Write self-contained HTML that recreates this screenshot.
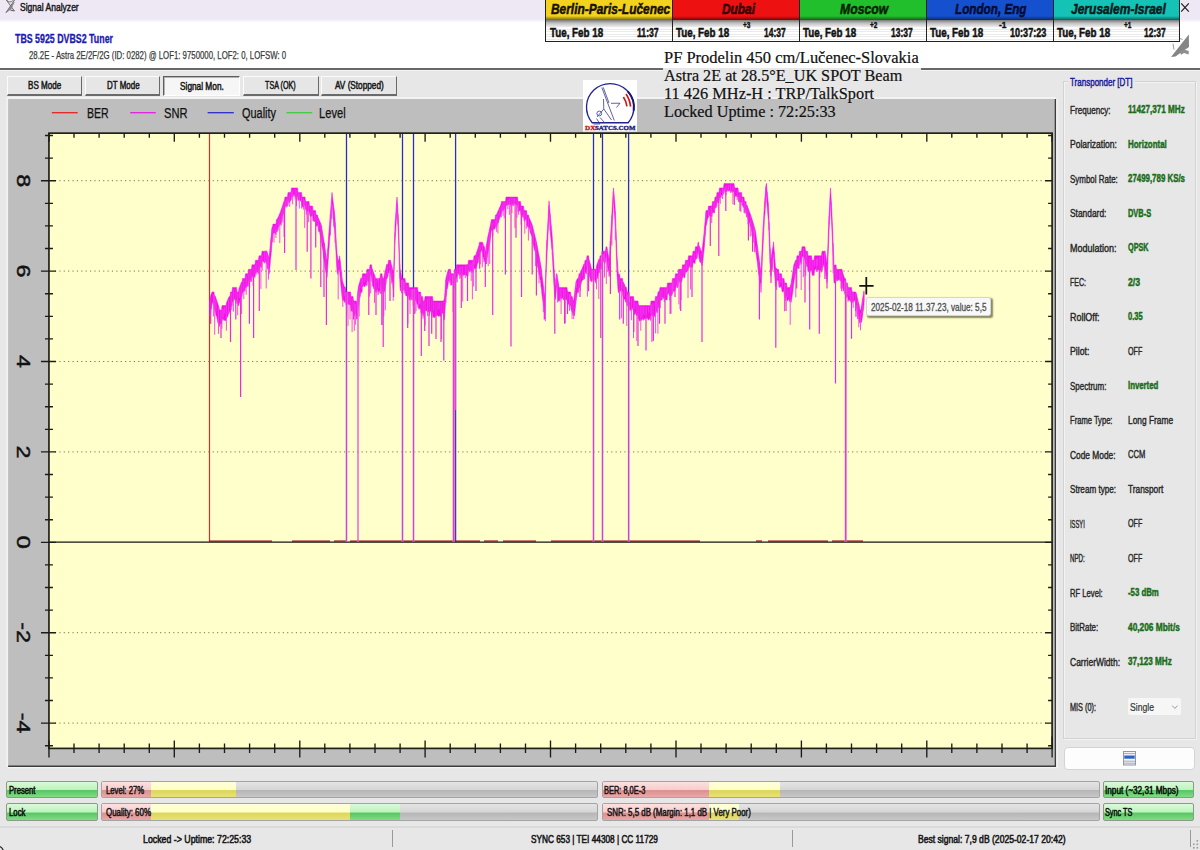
<!DOCTYPE html>
<html><head><meta charset="utf-8"><title>Signal Analyzer</title>
<style>
html,body{margin:0;padding:0;}
body{width:1200px;height:850px;overflow:hidden;background:#f0f0f0;position:relative;font-family:"Liberation Sans",sans-serif;}
.b{position:absolute;box-sizing:border-box;}
.t{position:absolute;white-space:nowrap;transform-origin:0 50%;display:block;}
svg{position:absolute;left:0;top:0;}
</style></head><body>
<div class="b" style="left:0.0px;top:0.0px;width:1200.0px;height:21.5px;background:linear-gradient(#eee8f5 0,#eee8f5 86%,#fbfafd 100%);"></div>
<div class="b" style="left:0.0px;top:21.5px;width:1200.0px;height:46.0px;background:#fff;"></div>
<div class="b" style="left:0.0px;top:69.0px;width:1200.0px;height:781.0px;background:#e7e7e7;"></div>
<div class="b" style="left:0.0px;top:67.9px;width:1200.0px;height:1.7px;background:#686868;"></div>
<div class="b" style="left:0.0px;top:69.6px;width:1200.0px;height:1.4px;background:#f4f4f4;"></div>
<svg width="20" height="20" viewBox="0 0 20 20"><g fill="none" stroke="#6a6a6a" stroke-width="1"><path d="M5.6 -1 L14.3 10.8 M14.6 0 L6 12.6"/><path d="M14.2 2.2 L11 9 L6.2 12.4 Z" fill="#8a8a8a" stroke="#777" stroke-width="0.6"/><path d="M10.5 10.2 L14.5 10.8" stroke-width="1.2"/><path d="M6.5 0 Q10 4 13.5 0" stroke-width="0.9"/></g></svg>
<span class="t" style="left:20.0px;top:0.0px;font:10.5px/15px 'Liberation Sans',sans-serif;color:#181818;transform:scaleX(0.811);-webkit-text-stroke:0.45px #181818;">Signal Analyzer</span>
<span class="t" style="left:14.5px;top:30.8px;font:bold 12px/17px 'Liberation Sans',sans-serif;color:#1a1ab4;transform:scaleX(0.736);-webkit-text-stroke:0.3px #1a1ab4;">TBS 5925 DVBS2 Tuner</span>
<span class="t" style="left:28.7px;top:48.3px;font:10.5px/15px 'Liberation Sans',sans-serif;color:#3c3c3c;transform:scaleX(0.743);-webkit-text-stroke:0.25px #3c3c3c;">28.2E - Astra 2E/2F/2G (ID: 0282) @ LOF1: 9750000, LOF2: 0, LOFSW: 0</span>
<svg width="1200" height="22" viewBox="0 0 1200 22"><path d="M1181.2 3.3 L1188.8 11.6 M1188.8 3.3 L1181.2 11.6" stroke="#1c1c1c" stroke-width="1.15" fill="none"/></svg>
<div class="b" style="left:7.0px;top:75.6px;width:75.0px;height:20.1px;background:#e6e6e6;border-top:1px solid #fbfbfb;border-left:1px solid #fbfbfb;border-right:1.5px solid #6a6a6a;border-bottom:2px solid #6a6a6a;"></div>
<span class="t" style="left:28.0px;top:77.8px;font:10.5px/15px 'Liberation Sans',sans-serif;color:#161616;transform:scaleX(0.769);-webkit-text-stroke:0.5px #161616;">BS Mode</span>
<div class="b" style="left:85.0px;top:75.6px;width:74.5px;height:20.1px;background:#e6e6e6;border-top:1px solid #fbfbfb;border-left:1px solid #fbfbfb;border-right:1.5px solid #6a6a6a;border-bottom:2px solid #6a6a6a;"></div>
<span class="t" style="left:106.7px;top:77.8px;font:10.5px/15px 'Liberation Sans',sans-serif;color:#161616;transform:scaleX(0.758);-webkit-text-stroke:0.5px #161616;">DT Mode</span>
<div class="b" style="left:162.8px;top:75.6px;width:77.7px;height:20.1px;background:#f6f6f6;border:1.5px solid #5e5e5e;border-right:1px solid #fff;border-bottom:1px solid #fff;box-shadow:inset 1px 1px 0 #b4b4b4;"></div>
<span class="t" style="left:180.2px;top:78.8px;font:10.5px/15px 'Liberation Sans',sans-serif;color:#161616;transform:scaleX(0.790);-webkit-text-stroke:0.5px #161616;">Signal Mon.</span>
<div class="b" style="left:242.6px;top:75.6px;width:76.1px;height:20.1px;background:#e6e6e6;border-top:1px solid #fbfbfb;border-left:1px solid #fbfbfb;border-right:1.5px solid #6a6a6a;border-bottom:2px solid #6a6a6a;"></div>
<span class="t" style="left:265.0px;top:77.8px;font:10.5px/15px 'Liberation Sans',sans-serif;color:#161616;transform:scaleX(0.683);-webkit-text-stroke:0.5px #161616;">TSA (OK)</span>
<div class="b" style="left:321.3px;top:75.6px;width:76.2px;height:20.1px;background:#e6e6e6;border-top:1px solid #fbfbfb;border-left:1px solid #fbfbfb;border-right:1.5px solid #6a6a6a;border-bottom:2px solid #6a6a6a;"></div>
<span class="t" style="left:335.3px;top:77.8px;font:10.5px/15px 'Liberation Sans',sans-serif;color:#161616;transform:scaleX(0.782);-webkit-text-stroke:0.5px #161616;">AV (Stopped)</span>
<div class="b" style="left:545.0px;top:0.0px;width:635.4px;height:42.4px;background:#222;"></div>
<div class="b" style="left:546.1px;top:0.0px;width:126.0px;height:20.3px;background:linear-gradient(#f2d21c 0,#f2d21c 80%,rgba(0,0,0,.5) 100%),#f2d21c;"></div>
<div class="b" style="left:546.1px;top:20.3px;width:126.0px;height:21.0px;background:linear-gradient(#787878 0,#bdbdbd 14%,#e6e6e6 30%,#fff 50%),#fff;"><div class="b" style="left:0;top:7px;right:0;bottom:0;background:repeating-linear-gradient(#fff 0,#fff 1.6px,#e6e6e6 1.6px,#e6e6e6 2.6px);opacity:.8"></div></div>
<span class="t" style="left:550.7px;top:-0.6px;font:italic bold 14.5px/20px 'Liberation Sans',sans-serif;color:#161000;transform:scaleX(0.822);-webkit-text-stroke:0.5px #161000;">Berlin-Paris-Lučenec</span>
<span class="t" style="left:549.5px;top:24.2px;font:bold 12.5px/18px 'Liberation Sans',sans-serif;color:#111;transform:scaleX(0.783);-webkit-text-stroke:0.5px #111;">Tue, Feb 18</span>
<span class="t" style="left:636.9px;top:24.2px;font:bold 12.5px/18px 'Liberation Sans',sans-serif;color:#111;transform:scaleX(0.691);-webkit-text-stroke:0.5px #111;">11:37</span>
<div class="b" style="left:672.9px;top:0.0px;width:126.0px;height:20.3px;background:linear-gradient(#ee1111 0,#ee1111 80%,rgba(0,0,0,.5) 100%),#ee1111;"></div>
<div class="b" style="left:672.9px;top:20.3px;width:126.0px;height:21.0px;background:linear-gradient(#787878 0,#bdbdbd 14%,#e6e6e6 30%,#fff 50%),#fff;"><div class="b" style="left:0;top:7px;right:0;bottom:0;background:repeating-linear-gradient(#fff 0,#fff 1.6px,#e6e6e6 1.6px,#e6e6e6 2.6px);opacity:.8"></div></div>
<span class="t" style="left:721.5px;top:-0.6px;font:italic bold 14.5px/20px 'Liberation Sans',sans-serif;color:#300000;transform:scaleX(0.819);-webkit-text-stroke:0.5px #300000;">Dubai</span>
<span class="t" style="left:676.3px;top:24.2px;font:bold 12.5px/18px 'Liberation Sans',sans-serif;color:#111;transform:scaleX(0.783);-webkit-text-stroke:0.5px #111;">Tue, Feb 18</span>
<span class="t" style="left:763.7px;top:24.2px;font:bold 12.5px/18px 'Liberation Sans',sans-serif;color:#111;transform:scaleX(0.676);-webkit-text-stroke:0.5px #111;">14:37</span>
<span class="t" style="left:743.2px;top:19.1px;font:bold 9px/13px 'Liberation Sans',sans-serif;color:#111;transform:scaleX(0.721);-webkit-text-stroke:0.4px #111;">+3</span>
<div class="b" style="left:799.7px;top:0.0px;width:126.0px;height:20.3px;background:linear-gradient(#22bf2c 0,#22bf2c 80%,rgba(0,0,0,.5) 100%),#22bf2c;"></div>
<div class="b" style="left:799.7px;top:20.3px;width:126.0px;height:21.0px;background:linear-gradient(#787878 0,#bdbdbd 14%,#e6e6e6 30%,#fff 50%),#fff;"><div class="b" style="left:0;top:7px;right:0;bottom:0;background:repeating-linear-gradient(#fff 0,#fff 1.6px,#e6e6e6 1.6px,#e6e6e6 2.6px);opacity:.8"></div></div>
<span class="t" style="left:839.8px;top:-0.6px;font:italic bold 14.5px/20px 'Liberation Sans',sans-serif;color:#041e04;transform:scaleX(0.843);-webkit-text-stroke:0.5px #041e04;">Moscow</span>
<span class="t" style="left:803.1px;top:24.2px;font:bold 12.5px/18px 'Liberation Sans',sans-serif;color:#111;transform:scaleX(0.783);-webkit-text-stroke:0.5px #111;">Tue, Feb 18</span>
<span class="t" style="left:890.5px;top:24.2px;font:bold 12.5px/18px 'Liberation Sans',sans-serif;color:#111;transform:scaleX(0.676);-webkit-text-stroke:0.5px #111;">13:37</span>
<span class="t" style="left:870.0px;top:19.1px;font:bold 9px/13px 'Liberation Sans',sans-serif;color:#111;transform:scaleX(0.721);-webkit-text-stroke:0.4px #111;">+2</span>
<div class="b" style="left:926.5px;top:0.0px;width:126.0px;height:20.3px;background:linear-gradient(#1551cf 0,#1551cf 80%,rgba(0,0,0,.5) 100%),#1551cf;"></div>
<div class="b" style="left:926.5px;top:20.3px;width:126.0px;height:21.0px;background:linear-gradient(#787878 0,#bdbdbd 14%,#e6e6e6 30%,#fff 50%),#fff;"><div class="b" style="left:0;top:7px;right:0;bottom:0;background:repeating-linear-gradient(#fff 0,#fff 1.6px,#e6e6e6 1.6px,#e6e6e6 2.6px);opacity:.8"></div></div>
<span class="t" style="left:954.7px;top:-0.6px;font:italic bold 14.5px/20px 'Liberation Sans',sans-serif;color:#040a30;transform:scaleX(0.807);-webkit-text-stroke:0.5px #040a30;">London, Eng</span>
<span class="t" style="left:929.9px;top:24.2px;font:bold 12.5px/18px 'Liberation Sans',sans-serif;color:#111;transform:scaleX(0.783);-webkit-text-stroke:0.5px #111;">Tue, Feb 18</span>
<span class="t" style="left:1009.6px;top:24.2px;font:bold 12.5px/18px 'Liberation Sans',sans-serif;color:#111;transform:scaleX(0.726);-webkit-text-stroke:0.5px #111;">10:37:23</span>
<span class="t" style="left:998.5px;top:19.1px;font:bold 9px/13px 'Liberation Sans',sans-serif;color:#111;transform:scaleX(0.925);-webkit-text-stroke:0.4px #111;">-1</span>
<div class="b" style="left:1053.3px;top:0.0px;width:125.9px;height:20.3px;background:linear-gradient(#14c2b6 0,#14c2b6 80%,rgba(0,0,0,.5) 100%),#14c2b6;"></div>
<div class="b" style="left:1053.3px;top:20.3px;width:125.9px;height:21.0px;background:linear-gradient(#787878 0,#bdbdbd 14%,#e6e6e6 30%,#fff 50%),#fff;"><div class="b" style="left:0;top:7px;right:0;bottom:0;background:repeating-linear-gradient(#fff 0,#fff 1.6px,#e6e6e6 1.6px,#e6e6e6 2.6px);opacity:.8"></div></div>
<span class="t" style="left:1070.8px;top:-0.6px;font:italic bold 14.5px/20px 'Liberation Sans',sans-serif;color:#031a1a;transform:scaleX(0.829);-webkit-text-stroke:0.5px #031a1a;">Jerusalem-Israel</span>
<span class="t" style="left:1056.7px;top:24.2px;font:bold 12.5px/18px 'Liberation Sans',sans-serif;color:#111;transform:scaleX(0.783);-webkit-text-stroke:0.5px #111;">Tue, Feb 18</span>
<span class="t" style="left:1144.0px;top:24.2px;font:bold 12.5px/18px 'Liberation Sans',sans-serif;color:#111;transform:scaleX(0.676);-webkit-text-stroke:0.5px #111;">12:37</span>
<span class="t" style="left:1123.6px;top:19.1px;font:bold 9px/13px 'Liberation Sans',sans-serif;color:#111;transform:scaleX(0.721);-webkit-text-stroke:0.4px #111;">+1</span>
<div class="b" style="left:671.8px;top:0.0px;width:1.3px;height:42.0px;background:#222;"></div>
<div class="b" style="left:798.8px;top:0.0px;width:1.3px;height:42.0px;background:#222;"></div>
<div class="b" style="left:925.8px;top:0.0px;width:1.3px;height:42.0px;background:#222;"></div>
<div class="b" style="left:1052.8px;top:0.0px;width:1.3px;height:42.0px;background:#222;"></div>
<svg width="1200" height="70" viewBox="0 0 1200 70"><g fill="#858585" stroke="none"><path d="M1188.8 34.4 L1189 47 L1184.5 50 L1175.5 56.6 L1171 57 Z"/><path d="M1179.5 51 L1184 49.5 L1188.8 51 L1188.6 54.6 L1184 53 L1181 54.8 Z" fill="#8e8e8e"/><path d="M1173 43.7 L1174 49.6" stroke="#9a9a9a" stroke-width="1" fill="none"/><path d="M1180 38.5 L1182.5 39.5" stroke="#999" stroke-width="1" fill="none"/></g></svg>
<svg width="1200" height="850" viewBox="0 0 1200 850" font-family="Liberation Sans, sans-serif">
<rect x="8" y="98.8" width="1047.5" height="667.5" fill="#bebebe"/>
<path d="M8 766.2 H1055.4 V99" fill="none" stroke="#3c3c3c" stroke-width="1.4"/>
<path d="M7.2 767 V98 H1056" fill="none" stroke="#f2f2f2" stroke-width="1.8"/>
<path d="M1057 99 V767.6 H8" fill="none" stroke="#f4f4f4" stroke-width="1.3"/>
<rect x="48.95" y="133.15" width="1003.1499999999999" height="615.25" fill="#ffffcc"/>
<line x1="54.95" y1="180.7" x2="1046.1" y2="180.7" stroke="#77774e" stroke-width="1" stroke-dasharray="1.2 3.18"/>
<line x1="54.95" y1="271.1" x2="1046.1" y2="271.1" stroke="#77774e" stroke-width="1" stroke-dasharray="1.2 3.18"/>
<line x1="54.95" y1="361.5" x2="1046.1" y2="361.5" stroke="#77774e" stroke-width="1" stroke-dasharray="1.2 3.18"/>
<line x1="54.95" y1="451.9" x2="1046.1" y2="451.9" stroke="#77774e" stroke-width="1" stroke-dasharray="1.2 3.18"/>
<line x1="54.95" y1="632.7" x2="1046.1" y2="632.7" stroke="#77774e" stroke-width="1" stroke-dasharray="1.2 3.18"/>
<line x1="54.95" y1="723.1" x2="1046.1" y2="723.1" stroke="#77774e" stroke-width="1" stroke-dasharray="1.2 3.18"/>
<line x1="346.5" y1="133.15" x2="346.5" y2="542.3" stroke="#d6d6ff" stroke-width="3" opacity=".4"/>
<line x1="346.5" y1="133.15" x2="346.5" y2="542.3" stroke="#2c2cae" stroke-width="1.15"/>
<line x1="402.5" y1="133.15" x2="402.5" y2="542.3" stroke="#d6d6ff" stroke-width="3" opacity=".4"/>
<line x1="402.5" y1="133.15" x2="402.5" y2="542.3" stroke="#2c2cae" stroke-width="1.15"/>
<line x1="413.5" y1="133.15" x2="413.5" y2="542.3" stroke="#d6d6ff" stroke-width="3" opacity=".4"/>
<line x1="413.5" y1="133.15" x2="413.5" y2="542.3" stroke="#2c2cae" stroke-width="1.15"/>
<line x1="455.6" y1="133.15" x2="455.6" y2="542.3" stroke="#d6d6ff" stroke-width="3" opacity=".4"/>
<line x1="455.6" y1="133.15" x2="455.6" y2="542.3" stroke="#2c2cae" stroke-width="1.15"/>
<line x1="593.5" y1="133.15" x2="593.5" y2="542.3" stroke="#d6d6ff" stroke-width="3" opacity=".4"/>
<line x1="593.5" y1="133.15" x2="593.5" y2="542.3" stroke="#2c2cae" stroke-width="1.15"/>
<line x1="602.5" y1="133.15" x2="602.5" y2="542.3" stroke="#d6d6ff" stroke-width="3" opacity=".4"/>
<line x1="602.5" y1="133.15" x2="602.5" y2="542.3" stroke="#2c2cae" stroke-width="1.15"/>
<line x1="628.6" y1="133.15" x2="628.6" y2="542.3" stroke="#d6d6ff" stroke-width="3" opacity=".4"/>
<line x1="628.6" y1="133.15" x2="628.6" y2="542.3" stroke="#2c2cae" stroke-width="1.15"/>
<line x1="48.95" y1="542.15" x2="1052.1" y2="542.15" stroke="#151510" stroke-width="1.35"/>
<line x1="209.5" y1="133.15" x2="209.5" y2="542.3" stroke="#ea2420" stroke-width="1.15"/>
<line x1="209" y1="541.05" x2="272" y2="541.05" stroke="#960612" stroke-width="1.2"/>
<line x1="292" y1="541.05" x2="330" y2="541.05" stroke="#960612" stroke-width="1.2"/>
<line x1="334" y1="541.05" x2="346" y2="541.05" stroke="#960612" stroke-width="1.2"/>
<line x1="350" y1="541.05" x2="480" y2="541.05" stroke="#960612" stroke-width="1.2"/>
<line x1="484" y1="541.05" x2="498" y2="541.05" stroke="#960612" stroke-width="1.2"/>
<line x1="503" y1="541.05" x2="536" y2="541.05" stroke="#960612" stroke-width="1.2"/>
<line x1="551" y1="541.05" x2="700" y2="541.05" stroke="#960612" stroke-width="1.2"/>
<line x1="756" y1="541.05" x2="762" y2="541.05" stroke="#960612" stroke-width="1.2"/>
<line x1="768" y1="541.05" x2="828" y2="541.05" stroke="#960612" stroke-width="1.2"/>
<line x1="832" y1="541.05" x2="863" y2="541.05" stroke="#960612" stroke-width="1.2"/>
<path d="M209.5 301.4 L210.0 299.1 L210.5 296.7 L211.0 294.4 L211.5 293.4 L212.0 291.9 L212.5 291.9 L213.0 291.9 L213.5 291.9 L214.0 291.9 L214.5 296.5 L215.0 295.8 L215.5 296.8 L216.0 298.3 L216.5 299.8 L217.0 301.3 L217.5 302.8 L218.0 304.3 L218.5 305.8 L219.0 307.3 L219.5 310.0 L220.0 310.0 L220.5 310.0 L221.0 310.0 L221.5 310.0 L222.0 305.5 L222.5 305.5 L223.0 305.5 L223.5 305.5 L224.0 305.5 L224.5 305.5 L225.0 305.5 L225.5 305.5 L226.0 305.5 L226.5 302.6 L227.0 301.5 L227.5 300.3 L228.0 299.1 L228.5 298.0 L229.0 296.8 L229.5 296.5 L230.0 296.5 L230.5 291.9 L231.0 291.9 L231.5 291.9 L232.0 291.9 L232.5 287.4 L233.0 287.4 L233.5 287.4 L234.0 287.4 L234.5 287.4 L235.0 287.4 L235.5 287.4 L236.0 287.4 L236.5 287.4 L237.0 291.9 L237.5 291.9 L238.0 291.9 L238.5 291.9 L239.0 288.5 L239.5 287.2 L240.0 285.9 L240.5 284.6 L241.0 283.3 L241.5 282.0 L242.0 282.9 L242.5 278.4 L243.0 278.4 L243.5 278.4 L244.0 278.4 L244.5 278.4 L245.0 278.4 L245.5 273.8 L246.0 273.8 L246.5 273.8 L247.0 273.8 L247.5 273.8 L248.0 273.8 L248.5 269.3 L249.0 269.3 L249.5 269.3 L250.0 269.3 L250.5 269.3 L251.0 269.3 L251.5 269.3 L252.0 264.8 L252.5 264.8 L253.0 264.8 L253.5 264.8 L254.0 264.8 L254.5 264.8 L255.0 264.8 L255.5 260.3 L256.0 260.3 L256.5 260.3 L257.0 260.3 L257.5 260.3 L258.0 260.3 L258.5 260.3 L259.0 255.8 L259.5 255.8 L260.0 255.8 L260.5 255.8 L261.0 255.8 L261.5 255.8 L262.0 251.2 L262.5 251.2 L263.0 251.2 L263.5 251.2 L264.0 251.2 L264.5 251.2 L265.0 251.2 L265.5 251.2 L266.0 251.2 L266.5 251.2 L267.0 251.3 L267.5 253.1 L268.0 254.8 L268.5 255.8 L269.0 258.4 L269.5 253.2 L270.0 248.1 L270.5 242.9 L271.0 237.7 L271.5 232.6 L272.0 227.4 L272.5 226.7 L273.0 224.1 L273.5 224.1 L274.0 224.1 L274.5 224.1 L275.0 224.1 L275.5 224.1 L276.0 224.1 L276.5 219.6 L277.0 219.6 L277.5 218.6 L278.0 217.5 L278.5 216.4 L279.0 215.2 L279.5 214.1 L280.0 213.0 L280.5 211.8 L281.0 210.3 L281.5 208.8 L282.0 207.3 L282.5 205.8 L283.0 204.2 L283.5 202.7 L284.0 201.2 L284.5 199.7 L285.0 197.0 L285.5 197.0 L286.0 197.0 L286.5 197.0 L287.0 197.0 L287.5 197.0 L288.0 192.4 L288.5 192.4 L289.0 192.4 L289.5 192.4 L290.0 192.4 L290.5 192.4 L291.0 192.4 L291.5 187.9 L292.0 187.9 L292.5 187.9 L293.0 187.9 L293.5 187.9 L294.0 187.9 L294.5 187.9 L295.0 187.9 L295.5 187.9 L296.0 187.9 L296.5 187.9 L297.0 187.9 L297.5 187.9 L298.0 192.4 L298.5 192.4 L299.0 192.4 L299.5 192.4 L300.0 192.4 L300.5 192.4 L301.0 192.4 L301.5 192.4 L302.0 197.0 L302.5 197.0 L303.0 197.0 L303.5 197.0 L304.0 197.0 L304.5 197.0 L305.0 197.0 L305.5 201.5 L306.0 201.5 L306.5 201.5 L307.0 201.5 L307.5 201.5 L308.0 201.5 L308.5 201.5 L309.0 201.5 L309.5 206.0 L310.0 206.0 L310.5 206.0 L311.0 206.0 L311.5 206.0 L312.0 206.0 L312.5 206.0 L313.0 210.5 L313.5 210.5 L314.0 210.5 L314.5 210.5 L315.0 210.5 L315.5 210.5 L316.0 215.0 L316.5 215.0 L317.0 215.0 L317.5 215.0 L318.0 217.2 L318.5 218.4 L319.0 219.5 L319.5 220.7 L320.0 221.8 L320.5 223.0 L321.0 224.1 L321.5 226.0 L322.0 229.1 L322.5 232.2 L323.0 235.3 L323.5 238.3 L324.0 241.4 L324.5 244.7 L325.0 248.1 L325.5 251.4 L326.0 254.7 L326.5 260.3 L327.0 261.4 L327.5 253.4 L328.0 245.3 L328.5 237.6 L329.0 231.1 L329.5 224.7 L330.0 218.2 L330.5 211.8 L331.0 205.3 L331.5 198.9 L332.0 192.4 L332.5 197.0 L333.0 200.7 L333.5 204.8 L334.0 209.0 L334.5 213.1 L335.0 218.2 L335.5 227.4 L336.0 236.5 L336.5 245.7 L337.0 253.6 L337.5 256.6 L338.0 259.6 L338.5 260.3 L339.0 260.3 L339.5 255.8 L340.0 258.6 L340.5 263.2 L341.0 267.7 L341.5 272.2 L342.0 276.8 L342.5 281.3 L343.0 282.7 L343.5 284.2 L344.0 285.6 L344.5 287.1 L345.0 287.4 L345.5 287.4 L346.0 291.9 L346.5 291.9 L347.0 291.9 L347.5 291.9 L348.0 291.9 L348.5 291.9 L349.0 291.9 L349.5 291.9 L350.0 291.9 L350.5 291.9 L351.0 296.5 L351.5 296.5 L352.0 296.5 L352.5 296.5 L353.0 296.5 L353.5 301.0 L354.0 301.0 L354.5 301.0 L355.0 301.0 L355.5 301.0 L356.0 301.0 L356.5 303.3 L357.0 299.5 L357.5 294.7 L358.0 289.8 L358.5 286.2 L359.0 284.5 L359.5 282.8 L360.0 281.1 L360.5 279.4 L361.0 277.7 L361.5 278.4 L362.0 278.4 L362.5 273.8 L363.0 273.8 L363.5 273.8 L364.0 273.8 L364.5 273.8 L365.0 273.8 L365.5 273.8 L366.0 273.8 L366.5 273.8 L367.0 269.3 L367.5 269.3 L368.0 269.3 L368.5 269.3 L369.0 269.3 L369.5 269.3 L370.0 264.8 L370.5 264.8 L371.0 264.8 L371.5 264.8 L372.0 268.3 L372.5 269.6 L373.0 271.0 L373.5 272.3 L374.0 273.6 L374.5 274.9 L375.0 276.2 L375.5 278.4 L376.0 278.4 L376.5 278.4 L377.0 278.4 L377.5 278.4 L378.0 282.9 L378.5 278.4 L379.0 278.4 L379.5 277.8 L380.0 278.4 L380.5 273.8 L381.0 273.8 L381.5 273.8 L382.0 273.8 L382.5 278.4 L383.0 278.4 L383.5 278.4 L384.0 277.0 L384.5 274.5 L385.0 272.1 L385.5 269.7 L386.0 267.3 L386.5 264.9 L387.0 263.9 L387.5 264.8 L388.0 264.8 L388.5 260.3 L389.0 260.3 L389.5 260.3 L390.0 260.3 L390.5 260.3 L391.0 263.1 L391.5 265.0 L392.0 266.8 L392.5 269.3 L393.0 270.6 L393.5 272.4 L394.0 259.1 L394.5 241.9 L395.0 224.8 L395.5 217.4 L396.0 210.0 L396.5 202.6 L397.0 197.0 L397.5 203.9 L398.0 212.6 L398.5 221.3 L399.0 236.4 L399.5 255.6 L400.0 268.2 L400.5 270.8 L401.0 273.3 L401.5 275.9 L402.0 278.4 L402.5 278.4 L403.0 278.4 L403.5 278.4 L404.0 278.4 L404.5 278.4 L405.0 278.4 L405.5 282.9 L406.0 282.9 L406.5 282.9 L407.0 282.9 L407.5 282.9 L408.0 282.9 L408.5 282.9 L409.0 287.4 L409.5 287.4 L410.0 287.4 L410.5 287.4 L411.0 287.4 L411.5 287.4 L412.0 287.4 L412.5 287.4 L413.0 287.4 L413.5 287.4 L414.0 287.4 L414.5 287.4 L415.0 287.4 L415.5 287.4 L416.0 287.4 L416.5 287.4 L417.0 287.4 L417.5 287.4 L418.0 291.9 L418.5 291.9 L419.0 291.9 L419.5 291.9 L420.0 291.9 L420.5 291.9 L421.0 296.5 L421.5 296.5 L422.0 296.5 L422.5 296.5 L423.0 301.0 L423.5 301.0 L424.0 301.0 L424.5 301.0 L425.0 296.5 L425.5 296.5 L426.0 296.5 L426.5 296.5 L427.0 296.5 L427.5 296.5 L428.0 296.5 L428.5 296.5 L429.0 296.5 L429.5 296.5 L430.0 296.5 L430.5 296.5 L431.0 296.5 L431.5 296.5 L432.0 296.5 L432.5 296.5 L433.0 301.0 L433.5 301.0 L434.0 301.0 L434.5 301.0 L435.0 301.0 L435.5 301.0 L436.0 301.0 L436.5 301.0 L437.0 301.0 L437.5 301.0 L438.0 301.0 L438.5 301.0 L439.0 301.0 L439.5 301.0 L440.0 301.0 L440.5 301.0 L441.0 301.0 L441.5 301.0 L442.0 301.0 L442.5 301.0 L443.0 301.0 L443.5 301.0 L444.0 299.7 L444.5 298.1 L445.0 290.5 L445.5 282.9 L446.0 277.7 L446.5 275.9 L447.0 274.1 L447.5 272.3 L448.0 270.5 L448.5 269.3 L449.0 269.3 L449.5 269.3 L450.0 269.3 L450.5 269.3 L451.0 273.8 L451.5 273.8 L452.0 273.8 L452.5 273.8 L453.0 273.8 L453.5 273.8 L454.0 273.8 L454.5 269.3 L455.0 269.3 L455.5 269.3 L456.0 269.3 L456.5 264.8 L457.0 264.8 L457.5 264.8 L458.0 264.8 L458.5 264.8 L459.0 264.8 L459.5 264.8 L460.0 264.8 L460.5 264.8 L461.0 264.8 L461.5 264.8 L462.0 264.8 L462.5 264.8 L463.0 264.8 L463.5 264.8 L464.0 264.8 L464.5 264.8 L465.0 264.8 L465.5 264.8 L466.0 264.8 L466.5 264.8 L467.0 264.8 L467.5 264.8 L468.0 264.8 L468.5 260.3 L469.0 260.3 L469.5 260.3 L470.0 260.3 L470.5 260.3 L471.0 260.3 L471.5 260.3 L472.0 260.3 L472.5 260.3 L473.0 260.3 L473.5 260.3 L474.0 255.8 L474.5 255.8 L475.0 255.8 L475.5 255.6 L476.0 254.1 L476.5 252.7 L477.0 251.2 L477.5 249.7 L478.0 248.2 L478.5 246.7 L479.0 245.3 L479.5 242.2 L480.0 242.2 L480.5 242.2 L481.0 242.2 L481.5 242.2 L482.0 242.2 L482.5 242.2 L483.0 243.5 L483.5 245.2 L484.0 246.9 L484.5 246.7 L485.0 251.2 L485.5 251.2 L486.0 247.4 L486.5 244.6 L487.0 241.8 L487.5 238.9 L488.0 236.1 L488.5 233.8 L489.0 231.4 L489.5 229.0 L490.0 226.7 L490.5 224.3 L491.0 222.0 L491.5 219.6 L492.0 219.6 L492.5 219.6 L493.0 219.6 L493.5 219.6 L494.0 219.6 L494.5 219.6 L495.0 219.6 L495.5 215.0 L496.0 215.0 L496.5 214.6 L497.0 213.4 L497.5 212.3 L498.0 211.2 L498.5 210.0 L499.0 208.9 L499.5 207.8 L500.0 206.7 L500.5 205.5 L501.0 204.4 L501.5 201.5 L502.0 201.5 L502.5 201.5 L503.0 201.5 L503.5 201.5 L504.0 201.5 L504.5 201.5 L505.0 201.5 L505.5 201.5 L506.0 197.0 L506.5 197.0 L507.0 197.0 L507.5 197.0 L508.0 197.0 L508.5 197.0 L509.0 197.0 L509.5 197.0 L510.0 197.0 L510.5 197.0 L511.0 197.0 L511.5 197.0 L512.0 197.0 L512.5 197.0 L513.0 197.0 L513.5 197.0 L514.0 197.0 L514.5 197.0 L515.0 197.0 L515.5 197.0 L516.0 197.0 L516.5 197.0 L517.0 197.0 L517.5 197.0 L518.0 201.5 L518.5 201.5 L519.0 201.5 L519.5 201.5 L520.0 201.5 L520.5 201.5 L521.0 206.0 L521.5 206.0 L522.0 206.0 L522.5 206.0 L523.0 206.0 L523.5 206.0 L524.0 210.5 L524.5 210.5 L525.0 210.5 L525.5 210.5 L526.0 210.5 L526.5 210.5 L527.0 215.0 L527.5 215.0 L528.0 215.0 L528.5 215.0 L529.0 217.3 L529.5 218.4 L530.0 219.6 L530.5 220.8 L531.0 222.0 L531.5 223.1 L532.0 224.3 L532.5 226.0 L533.0 228.0 L533.5 230.1 L534.0 232.1 L534.5 234.1 L535.0 236.1 L535.5 238.2 L536.0 240.2 L536.5 242.3 L537.0 245.0 L537.5 247.6 L538.0 250.2 L538.5 252.8 L539.0 255.5 L539.5 258.1 L540.0 260.7 L540.5 263.3 L541.0 266.8 L541.5 270.8 L542.0 274.8 L542.5 278.9 L543.0 282.9 L543.5 286.9 L544.0 290.7 L544.5 294.6 L545.0 298.4 L545.5 279.9 L546.0 261.3 L546.5 246.5 L547.0 237.4 L547.5 228.2 L548.0 219.1 L548.5 209.9 L549.0 200.8 L549.5 206.2 L550.0 211.7 L550.5 217.1 L551.0 222.5 L551.5 228.0 L552.0 233.4 L552.5 241.8 L553.0 250.3 L553.5 258.8 L554.0 267.2 L554.5 273.4 L555.0 279.5 L555.5 287.4 L556.0 282.9 L556.5 273.8 L557.0 273.8 L557.5 277.7 L558.0 280.8 L558.5 283.8 L559.0 286.9 L559.5 287.4 L560.0 287.4 L560.5 287.4 L561.0 287.4 L561.5 287.4 L562.0 287.4 L562.5 287.4 L563.0 287.4 L563.5 287.4 L564.0 287.4 L564.5 287.4 L565.0 287.4 L565.5 287.4 L566.0 287.4 L566.5 287.4 L567.0 287.4 L567.5 291.9 L568.0 291.9 L568.5 291.9 L569.0 291.9 L569.5 291.9 L570.0 291.9 L570.5 291.9 L571.0 296.5 L571.5 296.5 L572.0 296.2 L572.5 297.6 L573.0 301.0 L573.5 301.0 L574.0 298.4 L574.5 294.2 L575.0 289.9 L575.5 285.7 L576.0 281.4 L576.5 280.4 L577.0 279.4 L577.5 278.4 L578.0 278.4 L578.5 278.4 L579.0 273.8 L579.5 273.8 L580.0 273.8 L580.5 272.1 L581.0 270.9 L581.5 269.7 L582.0 268.6 L582.5 267.4 L583.0 266.2 L583.5 265.0 L584.0 263.8 L584.5 264.8 L585.0 260.3 L585.5 260.3 L586.0 260.3 L586.5 260.3 L587.0 255.8 L587.5 255.8 L588.0 255.8 L588.5 255.8 L589.0 259.5 L589.5 261.3 L590.0 263.0 L590.5 264.8 L591.0 266.6 L591.5 269.3 L592.0 269.3 L592.5 269.3 L593.0 269.3 L593.5 269.3 L594.0 269.3 L594.5 269.3 L595.0 269.3 L595.5 269.3 L596.0 269.3 L596.5 266.0 L597.0 264.5 L597.5 263.1 L598.0 261.6 L598.5 260.1 L599.0 259.1 L599.5 260.3 L600.0 255.8 L600.5 255.8 L601.0 255.8 L601.5 255.8 L602.0 251.2 L602.5 251.2 L603.0 251.2 L603.5 251.2 L604.0 251.2 L604.5 251.2 L605.0 251.2 L605.5 251.2 L606.0 246.7 L606.5 246.7 L607.0 247.4 L607.5 250.6 L608.0 253.8 L608.5 255.8 L609.0 260.1 L609.5 255.9 L610.0 246.8 L610.5 237.6 L611.0 228.5 L611.5 219.8 L612.0 211.5 L612.5 203.3 L613.0 195.0 L613.5 187.9 L614.0 193.0 L614.5 199.3 L615.0 205.6 L615.5 213.5 L616.0 227.6 L616.5 241.7 L617.0 254.5 L617.5 262.1 L618.0 269.7 L618.5 274.5 L619.0 275.2 L619.5 273.8 L620.0 278.4 L620.5 278.4 L621.0 278.4 L621.5 278.4 L622.0 278.4 L622.5 278.4 L623.0 282.9 L623.5 282.2 L624.0 283.4 L624.5 284.6 L625.0 285.7 L625.5 286.9 L626.0 287.4 L626.5 287.4 L627.0 291.9 L627.5 291.9 L628.0 291.9 L628.5 291.9 L629.0 291.9 L629.5 296.5 L630.0 296.5 L630.5 296.5 L631.0 296.5 L631.5 296.5 L632.0 296.5 L632.5 296.5 L633.0 296.5 L633.5 296.5 L634.0 301.0 L634.5 301.0 L635.0 301.0 L635.5 301.0 L636.0 301.0 L636.5 301.0 L637.0 301.0 L637.5 301.0 L638.0 301.0 L638.5 305.5 L639.0 305.5 L639.5 305.5 L640.0 305.5 L640.5 305.5 L641.0 305.5 L641.5 305.5 L642.0 305.5 L642.5 305.5 L643.0 305.5 L643.5 305.5 L644.0 305.5 L644.5 305.5 L645.0 305.5 L645.5 305.5 L646.0 305.5 L646.5 305.5 L647.0 305.5 L647.5 305.5 L648.0 305.5 L648.5 305.5 L649.0 305.5 L649.5 305.5 L650.0 305.5 L650.5 305.5 L651.0 301.0 L651.5 301.0 L652.0 301.0 L652.5 301.0 L653.0 301.0 L653.5 301.0 L654.0 301.0 L654.5 301.0 L655.0 301.0 L655.5 296.5 L656.0 296.5 L656.5 296.5 L657.0 296.5 L657.5 296.5 L658.0 291.9 L658.5 291.9 L659.0 291.6 L659.5 290.4 L660.0 287.4 L660.5 287.4 L661.0 287.4 L661.5 287.4 L662.0 287.4 L662.5 287.4 L663.0 287.4 L663.5 287.4 L664.0 287.4 L664.5 287.4 L665.0 287.4 L665.5 287.4 L666.0 287.4 L666.5 287.4 L667.0 287.4 L667.5 282.9 L668.0 282.9 L668.5 282.9 L669.0 282.9 L669.5 282.9 L670.0 282.9 L670.5 282.9 L671.0 282.9 L671.5 282.9 L672.0 282.9 L672.5 278.4 L673.0 278.4 L673.5 278.4 L674.0 278.4 L674.5 278.4 L675.0 278.4 L675.5 273.8 L676.0 273.8 L676.5 273.8 L677.0 273.8 L677.5 273.8 L678.0 273.8 L678.5 269.3 L679.0 269.3 L679.5 269.3 L680.0 269.3 L680.5 269.3 L681.0 269.3 L681.5 269.3 L682.0 269.3 L682.5 264.8 L683.0 264.8 L683.5 264.8 L684.0 264.8 L684.5 264.8 L685.0 264.8 L685.5 260.3 L686.0 260.3 L686.5 260.3 L687.0 260.3 L687.5 260.3 L688.0 260.3 L688.5 255.8 L689.0 255.8 L689.5 255.8 L690.0 255.8 L690.5 255.8 L691.0 255.8 L691.5 255.8 L692.0 255.8 L692.5 255.8 L693.0 251.2 L693.5 251.2 L694.0 251.2 L694.5 251.2 L695.0 251.2 L695.5 246.7 L696.0 246.7 L696.5 246.7 L697.0 246.7 L697.5 246.7 L698.0 242.2 L698.5 242.2 L699.0 246.7 L699.5 246.4 L700.0 247.8 L700.5 249.3 L701.0 251.2 L701.5 251.2 L702.0 251.2 L702.5 246.8 L703.0 242.3 L703.5 237.9 L704.0 233.4 L704.5 227.7 L705.0 222.1 L705.5 216.4 L706.0 210.7 L706.5 210.2 L707.0 210.5 L707.5 210.5 L708.0 210.5 L708.5 206.0 L709.0 206.0 L709.5 206.0 L710.0 206.0 L710.5 206.0 L711.0 206.0 L711.5 206.0 L712.0 206.0 L712.5 201.5 L713.0 201.5 L713.5 201.5 L714.0 201.5 L714.5 201.5 L715.0 197.0 L715.5 197.0 L716.0 197.0 L716.5 197.0 L717.0 192.4 L717.5 192.4 L718.0 192.4 L718.5 192.4 L719.0 192.4 L719.5 187.9 L720.0 187.9 L720.5 187.9 L721.0 187.9 L721.5 187.9 L722.0 187.9 L722.5 187.9 L723.0 187.9 L723.5 187.9 L724.0 183.4 L724.5 183.4 L725.0 183.4 L725.5 183.4 L726.0 183.4 L726.5 183.4 L727.0 183.4 L727.5 183.4 L728.0 183.4 L728.5 183.4 L729.0 183.4 L729.5 183.4 L730.0 183.4 L730.5 183.4 L731.0 183.4 L731.5 183.4 L732.0 183.4 L732.5 183.4 L733.0 183.4 L733.5 183.4 L734.0 183.4 L734.5 187.9 L735.0 187.9 L735.5 187.9 L736.0 187.9 L736.5 187.9 L737.0 187.9 L737.5 187.9 L738.0 187.9 L738.5 192.4 L739.0 192.4 L739.5 192.4 L740.0 192.4 L740.5 192.4 L741.0 192.4 L741.5 192.4 L742.0 197.0 L742.5 197.0 L743.0 197.0 L743.5 197.0 L744.0 197.0 L744.5 201.5 L745.0 201.5 L745.5 201.5 L746.0 201.5 L746.5 206.0 L747.0 205.1 L747.5 206.4 L748.0 207.8 L748.5 209.1 L749.0 210.5 L749.5 211.8 L750.0 213.2 L750.5 214.5 L751.0 215.9 L751.5 217.4 L752.0 219.1 L752.5 220.7 L753.0 222.4 L753.5 224.1 L754.0 225.7 L754.5 227.4 L755.0 229.1 L755.5 231.2 L756.0 235.1 L756.5 239.0 L757.0 242.9 L757.5 246.8 L758.0 250.7 L758.5 254.5 L759.0 258.1 L759.5 261.8 L760.0 265.5 L760.5 269.3 L761.0 272.8 L761.5 261.5 L762.0 250.2 L762.5 238.9 L763.0 229.8 L763.5 220.7 L764.0 211.5 L764.5 202.4 L765.0 196.5 L765.5 190.6 L766.0 184.8 L766.5 183.4 L767.0 190.3 L767.5 195.2 L768.0 200.2 L768.5 205.1 L769.0 217.9 L769.5 230.7 L770.0 243.5 L770.5 256.3 L771.0 259.3 L771.5 255.8 L772.0 252.3 L772.5 248.8 L773.0 246.7 L773.5 241.8 L774.0 248.2 L774.5 254.5 L775.0 260.8 L775.5 267.2 L776.0 267.9 L776.5 268.5 L777.0 269.3 L777.5 269.3 L778.0 269.3 L778.5 269.3 L779.0 273.8 L779.5 273.8 L780.0 273.8 L780.5 273.8 L781.0 273.8 L781.5 273.8 L782.0 278.4 L782.5 278.4 L783.0 278.4 L783.5 278.4 L784.0 278.4 L784.5 282.9 L785.0 282.9 L785.5 282.9 L786.0 282.9 L786.5 282.9 L787.0 287.4 L787.5 287.4 L788.0 287.4 L788.5 287.4 L789.0 287.4 L789.5 287.4 L790.0 287.4 L790.5 284.9 L791.0 284.1 L791.5 280.7 L792.0 277.3 L792.5 273.9 L793.0 270.5 L793.5 267.1 L794.0 264.2 L794.5 263.2 L795.0 262.1 L795.5 260.3 L796.0 260.3 L796.5 260.3 L797.0 255.8 L797.5 255.8 L798.0 255.8 L798.5 255.8 L799.0 255.8 L799.5 251.2 L800.0 251.2 L800.5 251.2 L801.0 251.2 L801.5 251.2 L802.0 246.7 L802.5 246.7 L803.0 246.7 L803.5 246.7 L804.0 246.7 L804.5 246.7 L805.0 246.7 L805.5 251.2 L806.0 251.2 L806.5 251.2 L807.0 251.2 L807.5 251.2 L808.0 255.8 L808.5 255.8 L809.0 255.8 L809.5 255.8 L810.0 255.8 L810.5 255.8 L811.0 255.8 L811.5 255.8 L812.0 260.3 L812.5 260.3 L813.0 260.3 L813.5 260.3 L814.0 260.3 L814.5 255.8 L815.0 255.8 L815.5 255.8 L816.0 255.8 L816.5 255.8 L817.0 255.8 L817.5 255.8 L818.0 255.8 L818.5 255.8 L819.0 255.8 L819.5 255.8 L820.0 255.8 L820.5 255.8 L821.0 255.8 L821.5 255.8 L822.0 251.2 L822.5 251.2 L823.0 251.2 L823.5 251.2 L824.0 251.2 L824.5 251.2 L825.0 250.8 L825.5 253.9 L826.0 257.0 L826.5 260.3 L827.0 263.2 L827.5 255.9 L828.0 241.8 L828.5 227.6 L829.0 216.8 L829.5 206.8 L830.0 196.7 L830.5 187.9 L831.0 196.3 L831.5 205.8 L832.0 215.4 L832.5 226.7 L833.0 239.3 L833.5 251.8 L834.0 264.4 L834.5 265.0 L835.0 265.5 L835.5 264.8 L836.0 264.8 L836.5 269.3 L837.0 269.3 L837.5 269.3 L838.0 269.3 L838.5 269.3 L839.0 269.3 L839.5 269.3 L840.0 269.3 L840.5 269.3 L841.0 269.3 L841.5 269.3 L842.0 269.3 L842.5 272.1 L843.0 273.6 L843.5 275.1 L844.0 276.6 L844.5 278.1 L845.0 279.2 L845.5 278.4 L846.0 282.9 L846.5 282.9 L847.0 282.9 L847.5 282.9 L848.0 287.4 L848.5 287.4 L849.0 287.4 L849.5 287.4 L850.0 287.4 L850.5 287.4 L851.0 287.4 L851.5 287.4 L852.0 291.9 L852.5 291.9 L853.0 291.9 L853.5 291.9 L854.0 291.9 L854.5 291.9 L855.0 291.9 L855.5 291.9 L856.0 292.4 L856.5 294.4 L857.0 296.5 L857.5 298.5 L858.0 300.5 L858.5 302.6 L859.0 304.8 L859.5 307.1 L860.0 310.0 L860.5 310.0 L861.0 309.6 L861.5 306.1 L862.0 302.6 L862.5 299.1 L863.0 296.2 L863.5 293.5 L864.0 290.7 L864.0 304.2 L863.5 309.6 L863.0 312.2 L862.5 316.3 L862.0 319.4 L861.5 322.5 L861.0 322.1 L860.5 318.7 L860.0 322.6 L859.5 322.9 L859.0 319.7 L858.5 316.9 L858.0 314.7 L857.5 314.3 L857.0 310.5 L856.5 306.2 L856.0 304.3 L855.5 303.2 L855.0 301.1 L854.5 299.8 L854.0 301.5 L853.5 301.2 L853.0 301.8 L852.5 299.8 L852.0 303.5 L851.5 299.2 L851.0 300.3 L850.5 300.7 L850.0 300.7 L849.5 300.0 L849.0 299.9 L848.5 299.5 L848.0 301.7 L847.5 295.9 L847.0 296.6 L846.5 297.8 L846.0 295.9 L845.5 291.3 L845.0 291.9 L844.5 293.6 L844.0 290.0 L843.5 291.1 L843.0 288.2 L842.5 285.7 L842.0 281.9 L841.5 281.8 L841.0 281.4 L840.5 280.4 L840.0 280.7 L839.5 278.6 L839.0 280.2 L838.5 278.8 L838.0 280.2 L837.5 281.0 L837.0 279.8 L836.5 280.2 L836.0 277.7 L835.5 275.6 L835.0 281.2 L834.5 283.2 L834.0 283.1 L833.5 269.1 L833.0 257.8 L832.5 243.8 L832.0 232.0 L831.5 220.6 L831.0 213.5 L830.5 195.9 L830.0 211.7 L829.5 221.5 L829.0 232.5 L828.5 245.7 L828.0 258.3 L827.5 276.1 L827.0 282.5 L826.5 273.8 L826.0 279.0 L825.5 273.5 L825.0 269.9 L824.5 266.9 L824.0 264.8 L823.5 265.1 L823.0 266.9 L822.5 267.6 L822.0 266.6 L821.5 272.4 L821.0 270.4 L820.5 270.4 L820.0 271.4 L819.5 270.0 L819.0 269.9 L818.5 269.2 L818.0 270.4 L817.5 270.1 L817.0 269.7 L816.5 271.2 L816.0 269.2 L815.5 269.1 L815.0 269.6 L814.5 270.6 L814.0 275.7 L813.5 275.1 L813.0 275.3 L812.5 275.5 L812.0 273.6 L811.5 269.7 L811.0 270.4 L810.5 270.1 L810.0 272.6 L809.5 272.5 L809.0 272.4 L808.5 269.6 L808.0 271.6 L807.5 266.4 L807.0 265.9 L806.5 263.8 L806.0 263.7 L805.5 262.1 L805.0 259.6 L804.5 258.4 L804.0 257.0 L803.5 256.5 L803.0 255.8 L802.5 257.1 L802.0 257.5 L801.5 262.6 L801.0 264.4 L800.5 262.0 L800.0 261.8 L799.5 262.2 L799.0 269.1 L798.5 266.7 L798.0 268.5 L797.5 267.4 L797.0 267.9 L796.5 273.3 L796.0 273.8 L795.5 273.0 L795.0 276.4 L794.5 278.6 L794.0 281.7 L793.5 285.2 L793.0 290.9 L792.5 293.5 L792.0 297.1 L791.5 299.9 L791.0 302.5 L790.5 299.5 L790.0 300.6 L789.5 301.6 L789.0 299.0 L788.5 299.2 L788.0 300.3 L787.5 300.8 L787.0 300.5 L786.5 296.0 L786.0 295.2 L785.5 297.7 L785.0 295.7 L784.5 297.8 L784.0 292.1 L783.5 290.8 L783.0 291.5 L782.5 292.2 L782.0 291.1 L781.5 286.9 L781.0 286.0 L780.5 287.1 L780.0 287.4 L779.5 286.8 L779.0 286.8 L778.5 280.9 L778.0 280.0 L777.5 280.5 L777.0 280.1 L776.5 281.1 L776.0 284.9 L775.5 286.7 L775.0 279.3 L774.5 273.5 L774.0 267.2 L773.5 253.6 L773.0 258.2 L772.5 267.3 L772.0 271.7 L771.5 266.2 L771.0 276.5 L770.5 274.1 L770.0 260.3 L769.5 248.9 L769.0 235.1 L768.5 221.3 L768.0 216.5 L767.5 210.1 L767.0 204.8 L766.5 194.0 L766.0 195.8 L765.5 204.8 L765.0 213.2 L764.5 217.2 L764.0 227.2 L763.5 237.2 L763.0 247.1 L762.5 255.2 L762.0 269.5 L761.5 279.3 L761.0 292.5 L760.5 282.8 L760.0 282.8 L759.5 280.8 L759.0 276.1 L758.5 272.9 L758.0 269.2 L757.5 263.3 L757.0 259.9 L756.5 256.3 L756.0 253.4 L755.5 249.6 L755.0 245.4 L754.5 240.6 L754.0 238.1 L753.5 236.6 L753.0 237.0 L752.5 232.8 L752.0 231.9 L751.5 230.4 L751.0 227.4 L750.5 226.9 L750.0 225.3 L749.5 222.8 L749.0 221.8 L748.5 219.6 L748.0 218.9 L747.5 216.2 L747.0 214.6 L746.5 217.1 L746.0 211.0 L745.5 210.6 L745.0 212.9 L744.5 211.7 L744.0 206.9 L743.5 207.4 L743.0 205.9 L742.5 205.6 L742.0 205.2 L741.5 201.3 L741.0 202.1 L740.5 201.6 L740.0 202.6 L739.5 201.5 L739.0 200.3 L738.5 202.0 L738.0 195.1 L737.5 197.2 L737.0 195.5 L736.5 196.1 L736.0 196.9 L735.5 195.5 L735.0 196.0 L734.5 197.1 L734.0 190.4 L733.5 192.0 L733.0 190.8 L732.5 191.5 L732.0 192.6 L731.5 189.9 L731.0 192.1 L730.5 190.7 L730.0 190.2 L729.5 191.2 L729.0 190.1 L728.5 191.1 L728.0 190.8 L727.5 189.5 L727.0 191.6 L726.5 189.7 L726.0 191.9 L725.5 191.2 L725.0 192.0 L724.5 189.7 L724.0 189.7 L723.5 193.8 L723.0 194.7 L722.5 195.5 L722.0 195.1 L721.5 195.3 L721.0 197.9 L720.5 197.0 L720.0 196.0 L719.5 198.1 L719.0 201.0 L718.5 202.9 L718.0 200.8 L717.5 202.8 L717.0 201.7 L716.5 205.6 L716.0 208.3 L715.5 207.9 L715.0 206.1 L714.5 212.9 L714.0 213.1 L713.5 211.7 L713.0 213.2 L712.5 210.6 L712.0 216.7 L711.5 216.2 L711.0 216.6 L710.5 215.9 L710.0 213.8 L709.5 216.2 L709.0 214.5 L708.5 214.9 L708.0 218.1 L707.5 219.5 L707.0 221.7 L706.5 224.7 L706.0 225.9 L705.5 233.5 L705.0 237.6 L704.5 244.9 L704.0 250.6 L703.5 254.2 L703.0 259.9 L702.5 263.6 L702.0 265.6 L701.5 262.8 L701.0 260.9 L700.5 262.8 L700.0 262.3 L699.5 260.4 L699.0 257.5 L698.5 252.0 L698.0 251.9 L697.5 256.3 L697.0 258.6 L696.5 258.6 L696.0 259.3 L695.5 258.7 L695.0 263.7 L694.5 263.2 L694.0 262.6 L693.5 263.2 L693.0 262.7 L692.5 267.1 L692.0 265.5 L691.5 267.7 L691.0 265.3 L690.5 267.5 L690.0 266.9 L689.5 265.4 L689.0 267.9 L688.5 267.6 L688.0 270.8 L687.5 270.7 L687.0 271.6 L686.5 272.2 L686.0 271.9 L685.5 271.4 L685.0 275.9 L684.5 277.8 L684.0 277.9 L683.5 276.6 L683.0 276.1 L682.5 277.7 L682.0 280.3 L681.5 282.2 L681.0 281.6 L680.5 282.4 L680.0 280.9 L679.5 282.5 L679.0 279.9 L678.5 281.3 L678.0 287.3 L677.5 287.2 L677.0 284.9 L676.5 285.2 L676.0 287.7 L675.5 287.3 L675.0 291.0 L674.5 289.8 L674.0 292.3 L673.5 291.1 L673.0 290.5 L672.5 290.1 L672.0 295.7 L671.5 295.1 L671.0 295.6 L670.5 293.8 L670.0 296.0 L669.5 295.0 L669.0 294.7 L668.5 293.1 L668.0 293.6 L667.5 294.5 L667.0 300.3 L666.5 298.9 L666.0 300.0 L665.5 298.6 L665.0 299.8 L664.5 296.9 L664.0 297.3 L663.5 298.7 L663.0 297.1 L662.5 297.6 L662.0 299.9 L661.5 300.2 L661.0 299.7 L660.5 300.4 L660.0 301.8 L659.5 304.8 L659.0 308.2 L658.5 306.7 L658.0 306.8 L657.5 311.9 L657.0 312.9 L656.5 311.2 L656.0 311.0 L655.5 312.7 L655.0 316.9 L654.5 316.2 L654.0 315.0 L653.5 314.6 L653.0 315.8 L652.5 316.3 L652.0 314.6 L651.5 314.9 L651.0 314.5 L650.5 320.6 L650.0 319.5 L649.5 318.6 L649.0 319.0 L648.5 320.1 L648.0 319.7 L647.5 318.4 L647.0 318.0 L646.5 317.8 L646.0 318.5 L645.5 318.1 L645.0 319.3 L644.5 319.2 L644.0 317.7 L643.5 320.3 L643.0 319.9 L642.5 318.4 L642.0 319.1 L641.5 320.4 L641.0 318.9 L640.5 320.6 L640.0 319.9 L639.5 321.4 L639.0 319.3 L638.5 319.0 L638.0 314.8 L637.5 313.7 L637.0 316.0 L636.5 315.4 L636.0 314.8 L635.5 313.6 L635.0 312.3 L634.5 314.8 L634.0 313.6 L633.5 309.6 L633.0 307.8 L632.5 308.6 L632.0 310.2 L631.5 308.7 L631.0 308.8 L630.5 309.9 L630.0 311.1 L629.5 309.0 L629.0 304.7 L628.5 304.7 L628.0 304.5 L627.5 306.3 L627.0 305.4 L626.5 301.6 L626.0 301.0 L625.5 302.3 L625.0 298.9 L624.5 299.3 L624.0 298.7 L623.5 297.0 L623.0 297.1 L622.5 292.0 L622.0 291.1 L621.5 290.2 L621.0 290.6 L620.5 291.4 L620.0 290.7 L619.5 285.0 L619.0 290.8 L618.5 292.9 L618.0 290.0 L617.5 281.8 L617.0 274.2 L616.5 258.9 L616.0 244.9 L615.5 228.7 L615.0 220.6 L614.5 214.5 L614.0 207.1 L613.5 196.6 L613.0 209.5 L612.5 220.2 L612.0 227.6 L611.5 236.1 L611.0 245.1 L610.5 255.5 L610.0 265.5 L609.5 275.2 L609.0 276.6 L608.5 268.0 L608.0 271.1 L607.5 267.7 L607.0 260.6 L606.5 257.2 L606.0 255.8 L605.5 261.7 L605.0 263.5 L604.5 263.5 L604.0 262.1 L603.5 261.4 L603.0 260.9 L602.5 264.0 L602.0 263.4 L601.5 269.1 L601.0 268.9 L600.5 266.8 L600.0 267.7 L599.5 272.5 L599.0 272.9 L598.5 272.9 L598.0 275.8 L597.5 278.7 L597.0 278.3 L596.5 279.3 L596.0 283.3 L595.5 281.9 L595.0 279.4 L594.5 280.4 L594.0 277.9 L593.5 277.8 L593.0 277.8 L592.5 280.5 L592.0 281.8 L591.5 281.8 L591.0 279.0 L590.5 281.0 L590.0 278.0 L589.5 275.6 L589.0 275.2 L588.5 267.9 L588.0 266.3 L587.5 264.3 L587.0 267.3 L586.5 273.8 L586.0 273.8 L585.5 272.5 L585.0 272.3 L584.5 279.2 L584.0 275.9 L583.5 279.8 L583.0 279.3 L582.5 280.3 L582.0 280.7 L581.5 282.4 L581.0 284.1 L580.5 285.3 L580.0 287.0 L579.5 287.8 L579.0 285.9 L578.5 292.6 L578.0 293.2 L577.5 291.0 L577.0 293.3 L576.5 298.3 L576.0 301.8 L575.5 305.9 L575.0 310.8 L574.5 315.3 L574.0 316.1 L573.5 313.9 L573.0 311.5 L572.5 311.7 L572.0 312.3 L571.5 309.7 L571.0 309.7 L570.5 304.0 L570.0 306.3 L569.5 305.5 L569.0 304.7 L568.5 304.0 L568.0 303.6 L567.5 304.3 L567.0 300.9 L566.5 298.7 L566.0 299.9 L565.5 298.3 L565.0 298.3 L564.5 300.1 L564.0 298.4 L563.5 300.1 L563.0 297.6 L562.5 298.3 L562.0 298.8 L561.5 298.9 L561.0 297.1 L560.5 298.6 L560.0 298.6 L559.5 300.4 L559.0 301.0 L558.5 300.5 L558.0 301.4 L557.5 293.2 L557.0 284.8 L556.5 286.6 L556.0 294.6 L555.5 299.3 L555.0 297.4 L554.5 291.8 L554.0 286.6 L553.5 278.6 L553.0 267.6 L552.5 258.8 L552.0 250.7 L551.5 246.3 L551.0 239.9 L550.5 235.2 L550.0 228.0 L549.5 216.7 L549.0 212.3 L548.5 226.7 L548.0 235.1 L547.5 245.1 L547.0 255.2 L546.5 264.6 L546.0 278.6 L545.5 298.0 L545.0 319.1 L544.5 314.5 L544.0 307.3 L543.5 305.4 L543.0 301.8 L542.5 298.6 L542.0 295.2 L541.5 289.0 L541.0 286.5 L540.5 280.6 L540.0 279.4 L539.5 275.8 L539.0 274.0 L538.5 270.9 L538.0 268.4 L537.5 266.2 L537.0 262.3 L536.5 258.7 L536.0 254.9 L535.5 252.3 L535.0 250.4 L534.5 250.4 L534.0 248.0 L533.5 245.8 L533.0 243.5 L532.5 239.2 L532.0 235.7 L531.5 235.7 L531.0 233.6 L530.5 233.6 L530.0 231.8 L529.5 228.6 L529.0 227.2 L528.5 227.2 L528.0 226.8 L527.5 226.8 L527.0 224.9 L526.5 220.1 L526.0 219.6 L525.5 219.7 L525.0 219.5 L524.5 221.4 L524.0 220.7 L523.5 215.7 L523.0 214.6 L522.5 217.1 L522.0 215.0 L521.5 214.3 L521.0 215.1 L520.5 210.6 L520.0 211.1 L519.5 210.7 L519.0 210.7 L518.5 211.6 L518.0 212.0 L517.5 206.3 L517.0 205.0 L516.5 204.7 L516.0 203.9 L515.5 204.4 L515.0 203.6 L514.5 203.9 L514.0 203.7 L513.5 204.6 L513.0 205.8 L512.5 205.0 L512.0 203.3 L511.5 204.6 L511.0 206.1 L510.5 204.0 L510.0 203.9 L509.5 203.9 L509.0 204.5 L508.5 205.0 L508.0 204.2 L507.5 205.2 L507.0 204.0 L506.5 206.1 L506.0 205.4 L505.5 208.6 L505.0 208.8 L504.5 209.2 L504.0 208.1 L503.5 210.9 L503.0 208.9 L502.5 210.2 L502.0 211.9 L501.5 212.8 L501.0 215.0 L500.5 217.0 L500.0 216.2 L499.5 219.3 L499.0 220.0 L498.5 222.4 L498.0 223.5 L497.5 223.9 L497.0 225.6 L496.5 227.2 L496.0 227.6 L495.5 225.4 L495.0 228.9 L494.5 229.4 L494.0 228.2 L493.5 228.2 L493.0 230.3 L492.5 228.4 L492.0 230.5 L491.5 229.6 L491.0 233.1 L490.5 237.5 L490.0 241.6 L489.5 244.4 L489.0 247.6 L488.5 251.6 L488.0 252.6 L487.5 255.8 L487.0 258.8 L486.5 263.7 L486.0 263.1 L485.5 264.6 L485.0 259.2 L484.5 259.8 L484.0 262.1 L483.5 257.6 L483.0 257.0 L482.5 252.7 L482.0 251.5 L481.5 250.1 L481.0 251.2 L480.5 252.3 L480.0 253.2 L479.5 252.6 L479.0 256.6 L478.5 260.4 L478.0 263.2 L477.5 262.7 L477.0 265.6 L476.5 267.6 L476.0 267.5 L475.5 269.4 L475.0 267.0 L474.5 268.9 L474.0 267.3 L473.5 270.7 L473.0 272.1 L472.5 271.0 L472.0 273.0 L471.5 270.5 L471.0 270.4 L470.5 270.7 L470.0 271.9 L469.5 271.5 L469.0 270.4 L468.5 269.1 L468.0 276.4 L467.5 276.5 L467.0 274.2 L466.5 276.3 L466.0 274.0 L465.5 275.0 L465.0 275.0 L464.5 275.1 L464.0 274.3 L463.5 275.4 L463.0 275.4 L462.5 275.3 L462.0 274.1 L461.5 273.5 L461.0 273.3 L460.5 275.0 L460.0 274.2 L459.5 275.6 L459.0 274.1 L458.5 273.8 L458.0 273.8 L457.5 276.1 L457.0 276.7 L456.5 277.8 L456.0 282.8 L455.5 282.5 L455.0 282.2 L454.5 282.6 L454.0 288.4 L453.5 286.6 L453.0 283.9 L452.5 284.9 L452.0 284.7 L451.5 284.7 L451.0 285.3 L450.5 282.2 L450.0 280.1 L449.5 280.9 L449.0 279.8 L448.5 281.3 L448.0 285.0 L447.5 288.6 L447.0 288.4 L446.5 295.0 L446.0 297.5 L445.5 302.8 L445.0 310.7 L444.5 318.4 L444.0 320.3 L443.5 315.0 L443.0 313.3 L442.5 313.1 L442.0 313.3 L441.5 314.4 L441.0 316.2 L440.5 316.1 L440.0 316.6 L439.5 315.6 L439.0 316.2 L438.5 316.1 L438.0 316.2 L437.5 315.2 L437.0 315.3 L436.5 314.1 L436.0 316.1 L435.5 316.1 L435.0 316.2 L434.5 317.5 L434.0 317.7 L433.5 315.7 L433.0 317.7 L432.5 313.4 L432.0 311.6 L431.5 314.1 L431.0 311.5 L430.5 311.0 L430.0 311.9 L429.5 311.4 L429.0 311.8 L428.5 312.1 L428.0 311.5 L427.5 311.7 L427.0 310.7 L426.5 311.0 L426.0 310.2 L425.5 310.2 L425.0 311.3 L424.5 314.9 L424.0 314.8 L423.5 314.2 L423.0 316.6 L422.5 312.0 L422.0 313.8 L421.5 313.6 L421.0 313.3 L420.5 307.6 L420.0 308.5 L419.5 308.0 L419.0 309.6 L418.5 307.0 L418.0 307.6 L417.5 304.2 L417.0 304.1 L416.5 301.5 L416.0 301.5 L415.5 299.7 L415.0 299.6 L414.5 298.2 L414.0 297.5 L413.5 298.0 L413.0 299.1 L412.5 299.8 L412.0 299.7 L411.5 297.1 L411.0 297.5 L410.5 298.4 L410.0 300.5 L409.5 299.2 L409.0 299.6 L408.5 294.8 L408.0 295.6 L407.5 295.8 L407.0 296.1 L406.5 295.9 L406.0 296.0 L405.5 294.2 L405.0 291.3 L404.5 290.4 L404.0 289.8 L403.5 289.5 L403.0 291.4 L402.5 291.8 L402.0 293.1 L401.5 293.1 L401.0 289.8 L400.5 291.0 L400.0 287.0 L399.5 273.0 L399.0 254.0 L398.5 238.9 L398.0 227.7 L397.5 219.3 L397.0 204.4 L396.5 217.9 L396.0 225.4 L395.5 234.1 L395.0 241.2 L394.5 260.5 L394.0 277.0 L393.5 290.9 L393.0 288.6 L392.5 281.3 L392.0 281.6 L391.5 279.5 L391.0 276.6 L390.5 272.9 L390.0 270.1 L389.5 269.4 L389.0 273.0 L388.5 271.9 L388.0 275.8 L387.5 276.9 L387.0 278.5 L386.5 278.4 L386.0 284.4 L385.5 285.9 L385.0 290.8 L384.5 291.1 L384.0 292.4 L383.5 289.1 L383.0 288.7 L382.5 291.6 L382.0 284.6 L381.5 283.4 L381.0 285.2 L380.5 286.2 L380.0 293.1 L379.5 290.8 L379.0 291.2 L378.5 291.6 L378.0 295.1 L377.5 289.2 L377.0 289.7 L376.5 290.6 L376.0 292.4 L375.5 290.5 L375.0 289.3 L374.5 287.8 L374.0 289.3 L373.5 287.4 L373.0 286.6 L372.5 282.5 L372.0 281.9 L371.5 277.3 L371.0 275.1 L370.5 273.4 L370.0 276.1 L369.5 281.5 L369.0 279.9 L368.5 282.0 L368.0 280.9 L367.5 280.4 L367.0 280.7 L366.5 285.7 L366.0 285.4 L365.5 284.5 L365.0 286.5 L364.5 287.0 L364.0 285.5 L363.5 285.3 L363.0 286.9 L362.5 284.8 L362.0 292.2 L361.5 292.8 L361.0 290.7 L360.5 294.8 L360.0 297.6 L359.5 297.7 L359.0 303.8 L358.5 306.7 L358.0 310.1 L357.5 313.3 L357.0 318.9 L356.5 319.2 L356.0 314.3 L355.5 312.7 L355.0 313.4 L354.5 315.6 L354.0 315.9 L353.5 314.8 L353.0 309.4 L352.5 311.5 L352.0 311.2 L351.5 310.7 L351.0 311.4 L350.5 305.3 L350.0 305.1 L349.5 304.5 L349.0 304.9 L348.5 304.1 L348.0 303.9 L347.5 304.2 L347.0 303.7 L346.5 305.1 L346.0 305.3 L345.5 300.9 L345.0 301.5 L344.5 302.6 L344.0 300.2 L343.5 299.4 L343.0 300.9 L342.5 299.5 L342.0 296.8 L341.5 291.4 L341.0 286.6 L340.5 281.3 L340.0 275.0 L339.5 268.2 L339.0 271.0 L338.5 269.2 L338.0 274.5 L337.5 273.5 L337.0 270.9 L336.5 263.4 L336.0 252.6 L335.5 244.6 L335.0 235.1 L334.5 229.6 L334.0 226.6 L333.5 220.8 L333.0 217.9 L332.5 207.4 L332.0 202.7 L331.5 214.4 L331.0 222.8 L330.5 227.1 L330.0 234.7 L329.5 241.0 L329.0 248.7 L328.5 254.4 L328.0 262.6 L327.5 270.8 L327.0 277.6 L326.5 270.7 L326.0 272.8 L325.5 269.3 L325.0 267.4 L324.5 262.7 L324.0 259.6 L323.5 257.3 L323.0 251.3 L322.5 248.4 L322.0 246.0 L321.5 240.9 L321.0 238.6 L320.5 237.1 L320.0 234.4 L319.5 231.1 L319.0 231.9 L318.5 231.0 L318.0 227.4 L317.5 224.9 L317.0 224.7 L316.5 226.1 L316.0 226.5 L315.5 220.2 L315.0 220.2 L314.5 221.9 L314.0 221.3 L313.5 219.9 L313.0 221.2 L312.5 214.8 L312.0 215.5 L311.5 216.2 L311.0 216.1 L310.5 216.4 L310.0 215.6 L309.5 213.8 L309.0 211.4 L308.5 210.9 L308.0 210.4 L307.5 211.4 L307.0 211.6 L306.5 210.7 L306.0 209.5 L305.5 209.4 L305.0 205.0 L304.5 205.0 L304.0 205.4 L303.5 207.2 L303.0 207.2 L302.5 207.1 L302.0 205.6 L301.5 202.5 L301.0 201.7 L300.5 200.4 L300.0 200.4 L299.5 199.6 L299.0 199.5 L298.5 200.3 L298.0 200.7 L297.5 195.2 L297.0 196.8 L296.5 197.0 L296.0 196.9 L295.5 196.8 L295.0 196.5 L294.5 195.4 L294.0 194.3 L293.5 195.3 L293.0 196.9 L292.5 196.2 L292.0 196.9 L291.5 195.1 L291.0 200.4 L290.5 200.3 L290.0 201.7 L289.5 202.4 L289.0 202.9 L288.5 201.6 L288.0 200.1 L287.5 206.2 L287.0 205.1 L286.5 206.2 L286.0 207.5 L285.5 205.1 L285.0 206.1 L284.5 211.4 L284.0 211.8 L283.5 214.1 L283.0 215.0 L282.5 216.6 L282.0 219.3 L281.5 220.8 L281.0 223.7 L280.5 224.6 L280.0 223.4 L279.5 225.1 L279.0 226.0 L278.5 226.9 L278.0 227.8 L277.5 230.3 L277.0 232.0 L276.5 229.2 L276.0 234.5 L275.5 233.4 L275.0 233.3 L274.5 232.7 L274.0 232.9 L273.5 233.8 L273.0 234.5 L272.5 240.3 L272.0 243.2 L271.5 248.6 L271.0 255.7 L270.5 259.5 L270.0 265.8 L269.5 271.1 L269.0 274.2 L268.5 267.0 L268.0 268.8 L267.5 269.2 L267.0 263.3 L266.5 263.5 L266.0 261.8 L265.5 260.7 L265.0 262.5 L264.5 263.3 L264.0 262.1 L263.5 261.6 L263.0 261.8 L262.5 260.7 L262.0 261.7 L261.5 267.4 L261.0 267.3 L260.5 266.7 L260.0 266.7 L259.5 266.6 L259.0 266.5 L258.5 273.5 L258.0 273.3 L257.5 271.7 L257.0 271.8 L256.5 271.4 L256.0 273.1 L255.5 272.9 L255.0 277.6 L254.5 276.6 L254.0 276.3 L253.5 275.2 L253.0 277.6 L252.5 276.2 L252.0 275.8 L251.5 280.0 L251.0 281.9 L250.5 279.8 L250.0 280.1 L249.5 280.3 L249.0 281.3 L248.5 280.1 L248.0 286.6 L247.5 285.8 L247.0 285.5 L246.5 287.1 L246.0 287.7 L245.5 286.7 L245.0 291.4 L244.5 289.5 L244.0 291.3 L243.5 290.8 L243.0 292.6 L242.5 292.8 L242.0 296.6 L241.5 296.5 L241.0 298.2 L240.5 299.9 L240.0 300.1 L239.5 303.1 L239.0 303.1 L238.5 306.0 L238.0 304.5 L237.5 301.4 L237.0 303.8 L236.5 298.8 L236.0 300.5 L235.5 299.5 L235.0 298.4 L234.5 300.0 L234.0 298.0 L233.5 300.3 L233.0 301.8 L232.5 301.4 L232.0 306.1 L231.5 305.4 L231.0 307.1 L230.5 307.7 L230.0 311.2 L229.5 312.0 L229.0 313.2 L228.5 313.7 L228.0 315.3 L227.5 317.3 L227.0 317.1 L226.5 317.7 L226.0 320.1 L225.5 321.1 L225.0 320.1 L224.5 320.4 L224.0 319.9 L223.5 318.7 L223.0 320.6 L222.5 319.1 L222.0 318.5 L221.5 323.2 L221.0 323.6 L220.5 324.3 L220.0 322.8 L219.5 326.8 L219.0 323.5 L218.5 323.8 L218.0 323.3 L217.5 320.8 L217.0 318.0 L216.5 315.8 L216.0 315.7 L215.5 312.4 L215.0 309.8 L214.5 309.8 L214.0 305.9 L213.5 303.6 L213.0 303.7 L212.5 301.9 L212.0 304.5 L211.5 308.8 L211.0 309.4 L210.5 313.8 L210.0 314.1 L209.5 315.9Z" fill="#f410ec" stroke="#f410ec" stroke-width="0.5" stroke-linejoin="round"/>
<path d="M213.6 294.5 V316.5 M214.7 296.8 V334.8 M215.9 299.6 V311.7 M218.5 307.3 V333.9 M220.6 310.3 V323.9 M221.9 309.3 V328.7 M223.1 308.5 V317.5 M224.7 307.3 V313.7 M226.4 304.5 V330.7 M228.5 299.6 V314.3 M230.5 295.2 V308.9 M231.7 292.8 V310.1 M233.4 289.5 V311.7 M235.8 290.5 V303.2 M237.7 292.4 V315.2 M239.4 289.0 V298.1 M241.6 283.4 V314.0 M243.8 279.4 V299.1 M246.2 276.1 V294.8 M248.2 273.3 V285.9 M249.7 271.2 V288.0 M250.9 269.8 V281.7 M253.1 267.0 V286.3 M255.1 264.6 V273.6 M256.8 262.4 V274.7 M258.8 259.4 V270.8 M260.9 256.3 V288.9 M262.2 254.4 V270.9 M264.4 252.2 V263.0 M266.2 250.5 V288.5 M267.3 253.8 V267.5 M268.5 258.3 V279.6 M271.0 239.2 V251.7 M272.2 228.8 V241.9 M274.0 226.2 V242.6 M275.9 223.8 V238.0 M278.2 218.7 V230.4 M279.8 214.9 V243.1 M281.2 211.3 V225.7 M282.8 206.4 V222.5 M284.0 202.8 V237.0 M285.6 199.6 V205.9 M287.0 197.4 V206.7 M288.0 195.9 V205.4 M289.7 193.5 V206.9 M291.3 191.6 V199.5 M292.6 190.2 V204.3 M295.1 188.9 V199.4 M296.5 190.3 V206.0 M298.1 191.9 V199.4 M299.3 193.2 V208.5 M301.6 196.1 V208.5 M303.4 198.3 V209.7 M304.7 200.0 V227.9 M306.3 201.8 V214.7 M308.6 204.6 V222.2 M310.4 206.6 V215.1 M312.2 209.1 V216.1 M314.6 212.7 V222.0 M316.9 216.4 V224.7 M318.5 220.0 V228.3 M320.2 223.9 V231.5 M321.2 226.2 V242.7 M322.7 234.8 V243.2 M324.1 244.0 V256.0 M325.8 255.2 V271.3 M327.9 248.8 V259.1 M330.4 215.0 V235.5 M331.5 201.0 V218.7 M333.9 209.8 V226.8 M335.1 222.3 V242.4 M337.1 256.1 V262.2 M338.2 262.2 V299.5 M340.2 262.2 V271.2 M341.4 272.7 V280.4 M342.8 283.6 V307.0 M344.3 288.1 V296.1 M346.8 292.0 V317.1 M348.0 292.9 V325.9 M350.0 294.8 V319.5 M352.1 298.2 V332.2 M354.3 301.8 V330.9 M355.6 303.6 V324.8 M357.5 296.3 V319.1 M359.2 285.5 V316.6 M361.1 279.0 V288.5 M362.5 277.3 V285.0 M364.2 275.6 V282.2 M366.0 273.8 V281.5 M367.8 271.7 V285.2 M369.6 269.1 V296.5 M370.7 267.8 V293.4 M372.4 271.0 V286.0 M374.5 276.4 V302.9 M376.1 279.8 V292.0 M378.6 281.6 V288.5 M380.6 276.7 V294.0 M381.7 276.8 V293.4 M383.8 279.7 V316.2 M385.3 272.3 V310.3 M387.1 265.4 V278.4 M389.5 262.5 V268.8 M391.7 267.3 V283.7 M393.2 273.0 V300.8 M394.8 232.6 V244.1 M396.7 201.8 V217.7 M398.0 214.1 V224.4 M399.7 263.9 V278.3 M402.0 280.0 V289.9 M404.3 281.6 V293.6 M406.1 282.9 V292.5 M407.9 285.7 V323.7 M410.0 289.1 V313.9 M411.5 289.6 V300.2 M413.0 289.1 V305.7 M415.0 288.7 V313.0 M416.1 289.8 V311.1 M418.5 292.2 V307.8 M419.6 293.8 V304.2 M420.6 295.9 V304.5 M423.1 300.9 V318.8 M425.1 300.0 V325.6 M427.6 298.4 V316.2 M429.5 297.4 V315.6 M431.7 298.8 V316.2 M433.8 301.6 V310.6 M435.8 302.6 V316.4 M438.0 302.6 V310.0 M439.3 302.6 V309.1 M441.6 302.1 V339.4 M443.6 301.5 V313.3 M445.9 279.5 V303.1 M447.8 272.7 V282.0 M449.3 271.0 V282.9 M450.8 273.0 V285.2 M452.9 275.7 V312.0 M453.9 273.6 V288.9 M455.0 271.4 V278.8 M457.3 267.2 V282.4 M459.8 266.8 V279.1 M460.8 266.6 V277.8 M462.7 266.2 V301.6 M465.3 265.5 V278.2 M467.0 264.8 V271.9 M469.0 263.9 V272.4 M470.2 263.4 V269.6 M471.2 262.9 V280.9 M472.4 261.4 V299.4 M473.6 259.9 V286.6 M474.8 258.3 V264.5 M476.9 252.9 V261.7 M479.1 246.5 V254.5 M480.2 244.6 V264.3 M482.3 243.5 V267.3 M484.5 250.3 V257.1 M486.5 246.1 V263.7 M488.2 236.5 V266.2 M489.7 229.9 V263.9 M491.8 222.8 V228.9 M492.8 221.8 V236.1 M495.1 219.5 V226.1 M496.6 215.9 V231.8 M497.9 213.0 V233.5 M499.7 209.0 V215.4 M501.3 205.4 V217.3 M503.0 202.2 V215.8 M504.2 201.6 V218.3 M505.8 200.8 V213.7 M507.8 199.8 V209.4 M509.4 198.8 V214.9 M511.9 197.1 V213.0 M513.8 197.7 V206.0 M514.9 198.4 V228.2 M517.0 200.1 V217.7 M518.6 202.4 V214.7 M521.1 206.3 V224.7 M523.1 209.2 V217.8 M524.8 211.7 V233.7 M526.4 214.1 V228.7 M528.4 217.3 V240.6 M530.6 222.7 V231.4 M531.6 225.1 V233.6 M533.3 230.9 V244.4 M535.6 240.3 V266.0 M536.7 245.0 V267.6 M539.0 257.0 V283.3 M540.9 267.7 V277.1 M543.3 286.7 V312.1 M545.4 286.4 V321.3 M546.9 240.4 V247.2 M548.8 205.9 V223.0 M550.1 214.7 V231.0 M552.6 245.5 V253.9 M554.6 276.1 V294.7 M556.3 279.1 V287.7 M557.7 280.8 V302.7 M560.0 288.5 V301.8 M561.1 288.5 V314.1 M563.4 288.6 V297.8 M565.3 289.9 V323.1 M567.7 291.6 V306.5 M569.5 294.0 V310.9 M570.8 295.8 V304.4 M572.1 298.1 V319.1 M573.7 302.5 V319.1 M575.3 288.9 V303.6 M576.5 281.9 V288.4 M579.1 276.6 V287.8 M580.3 274.1 V291.2 M582.6 268.8 V276.6 M584.5 264.3 V274.7 M586.4 260.7 V266.9 M587.4 258.6 V296.6 M589.8 263.9 V276.9 M591.7 270.0 V279.3 M594.0 270.0 V282.0 M596.5 267.7 V289.3 M598.8 261.1 V299.1 M600.2 258.3 V264.7 M601.5 255.6 V263.6 M602.6 253.9 V260.4 M604.5 251.8 V277.6 M606.3 249.8 V284.0 M608.7 259.9 V266.6 M610.7 236.0 V246.5 M611.9 215.4 V245.4 M613.3 192.0 V203.1 M615.3 211.1 V239.8 M617.4 261.8 V272.9 M619.1 276.9 V284.8 M621.6 280.3 V318.3 M623.0 282.6 V289.1 M624.4 285.9 V297.0 M626.8 291.5 V326.0 M629.2 295.4 V302.0 M631.4 298.7 V320.2 M633.5 300.1 V338.1 M634.6 300.8 V308.8 M636.8 303.0 V341.0 M638.9 305.4 V316.0 M640.8 306.4 V330.8 M642.0 306.6 V317.7 M643.4 306.8 V314.5 M645.2 306.8 V315.2 M646.5 306.8 V314.8 M648.6 306.5 V312.7 M650.8 304.9 V313.7 M651.8 304.1 V342.1 M653.2 303.1 V341.1 M655.6 299.8 V333.4 M656.8 297.7 V311.1 M657.9 295.7 V333.7 M660.3 290.2 V308.1 M662.0 288.5 V299.4 M664.3 288.5 V302.2 M666.3 287.5 V295.4 M667.7 286.6 V293.2 M669.8 285.0 V300.4 M671.1 283.9 V313.7 M672.5 281.7 V293.8 M673.7 279.8 V289.4 M676.1 276.3 V286.8 M677.4 274.6 V288.1 M678.9 272.7 V304.3 M680.0 271.2 V309.2 M681.1 269.9 V300.2 M683.2 267.0 V275.5 M685.0 264.4 V273.9 M686.4 262.3 V270.6 M688.0 260.0 V298.0 M690.6 257.4 V289.5 M691.7 256.3 V265.7 M694.2 253.1 V259.7 M696.3 248.9 V258.2 M698.9 246.2 V252.3 M701.2 252.8 V262.9 M702.4 249.3 V255.3 M704.7 226.8 V238.9 M706.0 212.3 V222.5 M708.5 209.9 V217.6 M710.4 208.0 V215.0 M711.7 206.7 V223.0 M713.8 202.4 V209.9 M715.0 200.1 V206.7 M716.9 196.2 V206.5 M718.4 193.6 V201.1 M720.3 190.4 V203.8 M722.6 187.8 V199.0 M724.0 187.1 V193.5 M726.1 186.0 V195.1 M728.3 184.9 V191.2 M730.6 184.4 V192.9 M732.9 186.2 V204.2 M734.7 187.6 V193.7 M737.2 190.2 V200.1 M739.6 193.2 V201.1 M740.9 194.9 V212.1 M742.5 197.7 V204.9 M744.1 200.9 V212.9 M745.1 202.9 V213.8 M746.8 206.3 V217.3 M748.0 209.3 V224.3 M750.3 215.5 V236.6 M751.8 220.0 V235.6 M753.4 225.3 V242.6 M754.5 229.0 V252.2 M757.0 244.6 V257.0 M758.8 258.6 V272.2 M760.7 272.2 V278.5 M763.3 226.8 V234.9 M764.5 203.5 V210.2 M765.9 187.0 V203.2 M767.0 191.8 V198.4 M769.1 222.3 V230.1 M770.1 248.7 V263.4 M772.1 253.5 V266.7 M774.2 252.1 V259.2 M776.6 270.2 V289.9 M777.6 271.6 V279.0 M779.4 273.9 V287.6 M780.9 276.2 V283.7 M782.5 279.0 V286.7 M784.5 282.5 V311.3 M785.7 285.0 V300.9 M787.9 289.4 V297.6 M790.2 286.9 V324.9 M791.9 279.9 V292.1 M794.2 265.4 V279.2 M795.8 262.0 V297.3 M798.1 257.4 V267.5 M799.5 255.0 V265.0 M801.2 252.0 V290.0 M803.4 248.0 V277.2 M805.7 251.6 V275.8 M806.8 253.7 V266.9 M809.4 257.4 V290.8 M810.8 258.8 V270.4 M812.8 260.1 V270.7 M814.6 259.5 V266.2 M816.3 258.9 V272.0 M817.4 258.3 V265.8 M819.9 256.5 V277.5 M822.4 254.3 V270.2 M824.7 252.0 V279.0 M827.1 265.5 V271.8 M829.1 215.6 V223.9 M831.2 202.2 V210.3 M833.1 243.2 V273.0 M835.1 267.2 V276.3 M836.9 269.2 V281.4 M839.4 270.7 V280.4 M840.9 271.3 V288.6 M842.1 272.6 V288.5 M844.7 280.1 V294.3 M846.1 283.1 V296.3 M847.9 286.9 V294.8 M849.1 288.3 V296.0 M850.6 290.0 V302.3 M852.1 291.5 V300.9 M853.2 292.2 V307.8 M855.5 293.7 V311.2 M857.5 300.0 V319.2 M858.8 305.3 V327.3 M860.5 313.6 V330.3 M862.5 300.7 V314.7 M864.0 292.3 V301.7" stroke="#f53af0" stroke-width="0.9" fill="none"/>
<path d="M210.7 297.4 V323.8 M221.0 310.0 V338.0 M230.5 295.2 V342.0 M235.8 290.4 V319.5 M240.6 285.9 V397.0 M249.4 271.6 V323.8 M253.6 266.4 V338.0 M259.3 258.6 V311.0 M284.6 201.0 V253.0 M296.0 189.8 V270.0 M307.2 202.9 V251.8 M310.9 207.3 V278.6 M315.7 214.5 V247.6 M320.8 225.2 V287.0 M324.0 243.0 V297.0 M326.4 259.0 V325.0 M353.5 300.5 V319.5 M368.8 270.3 V315.0 M376.0 279.7 V315.0 M381.8 277.0 V325.0 M383.2 279.2 V347.0 M390.0 261.9 V301.0 M393.6 274.4 V297.0 M407.7 285.3 V328.0 M414.6 288.6 V314.0 M421.3 297.4 V356.0 M424.7 300.2 V331.0 M429.0 297.6 V346.0 M431.7 298.9 V333.7 M436.0 302.6 V339.0 M441.0 302.3 V342.0 M443.8 301.4 V360.5 M455.4 270.6 V410.0 M461.3 266.5 V308.0 M467.5 264.5 V301.0 M476.0 255.7 V291.0 M479.7 244.8 V268.8 M485.3 253.0 V287.0 M492.7 221.9 V315.0 M505.4 201.0 V274.4 M511.0 197.7 V346.4 M516.0 199.1 V237.7 M521.5 206.8 V297.0 M532.2 226.4 V274.4 M536.4 243.4 V295.6 M544.3 294.6 V319.5 M554.8 278.6 V333.7 M564.6 289.4 V323.8 M567.5 291.3 V314.0 M573.0 300.6 V315.0 M580.0 274.8 V297.0 M588.6 259.6 V291.3 M600.8 257.0 V338.0 M610.4 241.0 V294.0 M619.7 277.7 V319.5 M623.3 283.4 V323.8 M633.8 300.3 V332.0 M638.0 304.4 V346.0 M646.0 306.8 V350.6 M653.3 303.0 V340.7 M659.5 292.1 V323.8 M665.0 288.5 V323.8 M670.2 284.7 V314.0 M675.0 277.9 V297.0 M680.7 270.4 V311.0 M692.0 256.0 V297.0 M702.0 252.8 V342.0 M710.3 208.1 V246.0 M718.8 192.9 V256.0 M725.8 186.2 V211.0 M734.3 187.2 V205.0 M740.0 193.8 V211.0 M748.4 210.5 V240.5 M752.6 222.7 V251.8 M759.4 262.7 V319.5 M771.0 260.9 V283.0 M775.8 269.2 V347.8 M786.0 285.5 V311.0 M796.7 260.2 V288.5 M805.0 250.1 V302.6 M809.7 257.7 V329.4 M819.3 256.9 V333.7 M827.0 264.8 V288.5 M835.5 267.7 V383.5 M841.8 271.6 V291.3 M851.5 291.1 V338.7 M856.0 294.0 V316.7 M861.6 307.0 V315.0" stroke="#ea2cd8" stroke-width="1.2" fill="none"/>
<path d="M346.5 291.9 V542.0 M358.0 291.4 V542.0 M402.5 280.3 V542.0 M413.5 289.0 V542.0 M453.3 275.0 V542.0 M454.1 273.3 V542.0 M593.5 270.0 V542.0 M602.5 254.0 V542.0 M628.6 294.4 V542.0 M845.4 281.6 V542.0 M846.0 282.9 V542.0" stroke="#ffc4f6" stroke-width="2.4" fill="none" opacity=".3"/>
<path d="M346.5 291.9 V542.0 M358.0 291.4 V542.0 M402.5 280.3 V542.0 M413.5 289.0 V542.0 M453.3 275.0 V542.0 M454.1 273.3 V542.0 M593.5 270.0 V542.0 M602.5 254.0 V542.0 M628.6 294.4 V542.0 M845.4 281.6 V542.0 M846.0 282.9 V542.0" stroke="#dc40c4" stroke-width="1.1" fill="none"/>
<rect x="48.95" y="133.15" width="1003.1499999999999" height="615.25" fill="none" stroke="#22221a" stroke-width="1.7"/>
<path d="M49.0 740.4 V757.4 M49.0 133.15 V141.65 M74.0 743.4 V752.9 M74.0 133.15 V137.65 M99.1 743.4 V752.9 M99.1 133.15 V137.65 M124.2 743.4 V752.9 M124.2 133.15 V137.65 M149.3 743.4 V752.9 M149.3 133.15 V137.65 M174.3 740.4 V757.4 M174.3 133.15 V141.65 M199.4 743.4 V752.9 M199.4 133.15 V137.65 M224.5 743.4 V752.9 M224.5 133.15 V137.65 M249.6 743.4 V752.9 M249.6 133.15 V137.65 M274.7 743.4 V752.9 M274.7 133.15 V137.65 M299.8 740.4 V757.4 M299.8 133.15 V141.65 M324.8 743.4 V752.9 M324.8 133.15 V137.65 M349.9 743.4 V752.9 M349.9 133.15 V137.65 M375.0 743.4 V752.9 M375.0 133.15 V137.65 M400.1 743.4 V752.9 M400.1 133.15 V137.65 M425.1 740.4 V757.4 M425.1 133.15 V141.65 M450.2 743.4 V752.9 M450.2 133.15 V137.65 M475.3 743.4 V752.9 M475.3 133.15 V137.65 M500.4 743.4 V752.9 M500.4 133.15 V137.65 M525.5 743.4 V752.9 M525.5 133.15 V137.65 M550.5 740.4 V757.4 M550.5 133.15 V141.65 M575.6 743.4 V752.9 M575.6 133.15 V137.65 M600.7 743.4 V752.9 M600.7 133.15 V137.65 M625.8 743.4 V752.9 M625.8 133.15 V137.65 M650.9 743.4 V752.9 M650.9 133.15 V137.65 M676.0 740.4 V757.4 M676.0 133.15 V141.65 M701.0 743.4 V752.9 M701.0 133.15 V137.65 M726.1 743.4 V752.9 M726.1 133.15 V137.65 M751.2 743.4 V752.9 M751.2 133.15 V137.65 M776.3 743.4 V752.9 M776.3 133.15 V137.65 M801.4 740.4 V757.4 M801.4 133.15 V141.65 M826.4 743.4 V752.9 M826.4 133.15 V137.65 M851.5 743.4 V752.9 M851.5 133.15 V137.65 M876.6 743.4 V752.9 M876.6 133.15 V137.65 M901.7 743.4 V752.9 M901.7 133.15 V137.65 M926.8 740.4 V757.4 M926.8 133.15 V141.65 M951.8 743.4 V752.9 M951.8 133.15 V137.65 M976.9 743.4 V752.9 M976.9 133.15 V137.65 M1002.0 743.4 V752.9 M1002.0 133.15 V137.65 M1027.1 743.4 V752.9 M1027.1 133.15 V137.65 M1052.1 740.4 V757.4 M1052.1 133.15 V141.65 M48.95 748.4 V757.6 M1052.1 736.4 V757.4 M44.95 135.5 H52.95 M1048.1 135.5 H1052.1 M44.95 158.1 H52.95 M1048.1 158.1 H1052.1 M40.95 180.7 H55.95 M1045.1 180.7 H1052.1 M44.95 203.3 H52.95 M1048.1 203.3 H1052.1 M44.95 225.9 H52.95 M1048.1 225.9 H1052.1 M44.95 248.5 H52.95 M1048.1 248.5 H1052.1 M40.95 271.1 H55.95 M1045.1 271.1 H1052.1 M44.95 293.7 H52.95 M1048.1 293.7 H1052.1 M44.95 316.3 H52.95 M1048.1 316.3 H1052.1 M44.95 338.9 H52.95 M1048.1 338.9 H1052.1 M40.95 361.5 H55.95 M1045.1 361.5 H1052.1 M44.95 384.1 H52.95 M1048.1 384.1 H1052.1 M44.95 406.7 H52.95 M1048.1 406.7 H1052.1 M44.95 429.3 H52.95 M1048.1 429.3 H1052.1 M40.95 451.9 H55.95 M1045.1 451.9 H1052.1 M44.95 474.5 H52.95 M1048.1 474.5 H1052.1 M44.95 497.1 H52.95 M1048.1 497.1 H1052.1 M44.95 519.7 H52.95 M1048.1 519.7 H1052.1 M40.95 542.3 H55.95 M1045.1 542.3 H1052.1 M44.95 564.9 H52.95 M1048.1 564.9 H1052.1 M44.95 587.5 H52.95 M1048.1 587.5 H1052.1 M44.95 610.1 H52.95 M1048.1 610.1 H1052.1 M40.95 632.7 H55.95 M1045.1 632.7 H1052.1 M44.95 655.3 H52.95 M1048.1 655.3 H1052.1 M44.95 677.9 H52.95 M1048.1 677.9 H1052.1 M44.95 700.5 H52.95 M1048.1 700.5 H1052.1 M40.95 723.1 H55.95 M1045.1 723.1 H1052.1 M44.95 745.7 H52.95 M1048.1 745.7 H1052.1" stroke="#1c1c16" stroke-width="1.35" fill="none"/>
<text transform="translate(16.8 180.7) rotate(90) scale(1.33 1)" text-anchor="middle" font-size="17.6" fill="#111" stroke="#111" stroke-width="0.45">8</text>
<text transform="translate(16.8 271.1) rotate(90) scale(1.33 1)" text-anchor="middle" font-size="17.6" fill="#111" stroke="#111" stroke-width="0.45">6</text>
<text transform="translate(16.8 361.5) rotate(90) scale(1.33 1)" text-anchor="middle" font-size="17.6" fill="#111" stroke="#111" stroke-width="0.45">4</text>
<text transform="translate(16.8 451.9) rotate(90) scale(1.33 1)" text-anchor="middle" font-size="17.6" fill="#111" stroke="#111" stroke-width="0.45">2</text>
<text transform="translate(16.8 542.3) rotate(90) scale(1.33 1)" text-anchor="middle" font-size="17.6" fill="#111" stroke="#111" stroke-width="0.45">0</text>
<text transform="translate(16.8 632.7) rotate(90) scale(1.33 1)" text-anchor="middle" font-size="17.6" fill="#111" stroke="#111" stroke-width="0.45">-2</text>
<text transform="translate(16.8 723.1) rotate(90) scale(1.33 1)" text-anchor="middle" font-size="17.6" fill="#111" stroke="#111" stroke-width="0.45">-4</text>
<line x1="51.8" y1="112.7" x2="77.7" y2="112.7" stroke="#e62222" stroke-width="1.3"/>
<line x1="130.2" y1="112.7" x2="155.8" y2="112.7" stroke="#e020e0" stroke-width="1.3"/>
<line x1="207.6" y1="112.7" x2="233.8" y2="112.7" stroke="#2c2ccc" stroke-width="1.3"/>
<line x1="286.3" y1="112.7" x2="312.2" y2="112.7" stroke="#40cc40" stroke-width="1.3"/>
<path d="M859.3 285.9 H873.6 M866.3 276.9 V294.4" stroke="#111" stroke-width="1.75" fill="none"/>
</svg>
<span class="t" style="left:86.8px;top:102.8px;font:14px/20px 'Liberation Sans',sans-serif;color:#111;transform:scaleX(0.754);-webkit-text-stroke:0.25px #111;">BER</span>
<span class="t" style="left:163.8px;top:102.8px;font:14px/20px 'Liberation Sans',sans-serif;color:#111;transform:scaleX(0.795);-webkit-text-stroke:0.25px #111;">SNR</span>
<span class="t" style="left:241.5px;top:102.8px;font:14px/20px 'Liberation Sans',sans-serif;color:#111;transform:scaleX(0.780);-webkit-text-stroke:0.25px #111;">Quality</span>
<span class="t" style="left:319.2px;top:102.8px;font:14px/20px 'Liberation Sans',sans-serif;color:#111;transform:scaleX(0.795);-webkit-text-stroke:0.25px #111;">Level</span>
<div class="b" style="left:866.3px;top:297.4px;width:124.9px;height:18.4px;background:#f8f8f8;border:1px solid #d6d6d0;border-radius:2.5px;box-shadow:1.6px 1.8px 1.6px rgba(40,40,20,.55);"></div>
<span class="t" style="left:870.6px;top:298.6px;font:11.2px/16px 'Liberation Sans',sans-serif;color:#4c4c4c;transform:scaleX(0.732);-webkit-text-stroke:0.3px #4c4c4c;">2025-02-18 11.37.23, value: 5,5</span>
<div class="b" style="left:662.7px;top:66.5px;width:258.3px;height:1.1px;background:#fff;"></div>
<div class="b" style="left:662.7px;top:67.6px;width:258.3px;height:3.4px;background:#e7e7e7;"></div>
<span class="t" style="left:663.8px;top:46.6px;font:16px/22px 'Liberation Serif',serif;color:#111;transform:scaleX(1.029);-webkit-text-stroke:0.2px #111;">PF Prodelin 450 cm/Lučenec-Slovakia</span>
<span class="t" style="left:663.8px;top:64.6px;font:16px/22px 'Liberation Serif',serif;color:#111;transform:scaleX(1.012);-webkit-text-stroke:0.2px #111;">Astra 2E at 28.5°E_UK SPOT Beam</span>
<span class="t" style="left:663.8px;top:82.7px;font:16px/22px 'Liberation Serif',serif;color:#111;transform:scaleX(1.020);-webkit-text-stroke:0.2px #111;">11 426 MHz-H : TRP/TalkSport</span>
<span class="t" style="left:663.8px;top:100.8px;font:16px/22px 'Liberation Serif',serif;color:#111;transform:scaleX(1.014);-webkit-text-stroke:0.2px #111;">Locked Uptime : 72:25:33</span>
<svg width="1200" height="140" viewBox="0 0 1200 140">
<rect x="583" y="80" width="54" height="51.5" fill="#fff"/>
<path d="M592.2 122.7 A23.7 23.7 0 1 1 628.2 122.7 Z" fill="none" stroke="#23238e" stroke-width="1.35"/>
<path d="M627.8 91.4 A23.7 23.7 0 0 1 633.7 110.6" fill="none" stroke="#15157a" stroke-width="2"/>
<path d="M623.4 97 Q626.2 101 626.9 106.4 M626 94 Q629.9 99.5 630.6 106.7" fill="none" stroke="#c81c1c" stroke-width="1.7"/>
<path d="M601.8 87.5 L614.3 120.5 M603.2 87.3 L609 103 M603.5 99 L603.8 109 L597 117 M603.8 109 L611.5 120 M611 103.3 L620 103.2 L616.5 107.5 M596.5 118.5 L600 124 L593.5 124 M600 117.5 L604.5 122.5" fill="none" stroke="#3a3a8a" stroke-width="0.8"/>
<circle cx="599.3" cy="113.5" r="2.4" fill="none" stroke="#4a4ab0" stroke-width="0.9"/>
</svg>
<span class="t" style="left:585.0px;top:123.2px;font:bold 6.8px/10px 'Liberation Serif',serif;color:#c0201c;transform:scaleX(1.049);-webkit-text-stroke:0.35px #c0201c;">DX</span>
<span class="t" style="left:595.3px;top:123.2px;font:bold 6.8px/10px 'Liberation Serif',serif;color:#1c1c78;transform:scaleX(1.019);-webkit-text-stroke:0.35px #1c1c78;">SATCS.COM</span>
<div class="b" style="left:1063.2px;top:81.3px;width:132.7px;height:657.3px;border:1px solid #d2d2d2;box-shadow:1px 1px 0 #f3f3f3,inset 1px 1px 0 #f3f3f3;"></div>
<div class="b" style="left:1067.5px;top:76.0px;width:67.5px;height:12.0px;background:#e7e7e7;"></div>
<span class="t" style="left:1070.0px;top:74.7px;font:10.5px/15px 'Liberation Sans',sans-serif;color:#1a1a9c;transform:scaleX(0.763);-webkit-text-stroke:0.45px #1a1a9c;">Transponder [DT]</span>
<span class="t" style="left:1070.0px;top:102.9px;font:10.5px/15px 'Liberation Sans',sans-serif;color:#262626;transform:scaleX(0.773);-webkit-text-stroke:0.4px #262626;">Frequency:</span>
<span class="t" style="left:1127.7px;top:102.1px;font:bold 10.5px/15px 'Liberation Sans',sans-serif;color:#1a6c1a;transform:scaleX(0.771);-webkit-text-stroke:0.45px #1a6c1a;">11427,371 MHz</span>
<span class="t" style="left:1070.0px;top:137.4px;font:10.5px/15px 'Liberation Sans',sans-serif;color:#262626;transform:scaleX(0.813);-webkit-text-stroke:0.4px #262626;">Polarization:</span>
<span class="t" style="left:1127.7px;top:136.6px;font:bold 10.5px/15px 'Liberation Sans',sans-serif;color:#1a6c1a;transform:scaleX(0.756);-webkit-text-stroke:0.45px #1a6c1a;">Horizontal</span>
<span class="t" style="left:1070.0px;top:171.9px;font:10.5px/15px 'Liberation Sans',sans-serif;color:#262626;transform:scaleX(0.758);-webkit-text-stroke:0.4px #262626;">Symbol Rate:</span>
<span class="t" style="left:1127.7px;top:171.1px;font:bold 10.5px/15px 'Liberation Sans',sans-serif;color:#1a6c1a;transform:scaleX(0.751);-webkit-text-stroke:0.45px #1a6c1a;">27499,789 KS/s</span>
<span class="t" style="left:1070.0px;top:206.4px;font:10.5px/15px 'Liberation Sans',sans-serif;color:#262626;transform:scaleX(0.799);-webkit-text-stroke:0.4px #262626;">Standard:</span>
<span class="t" style="left:1127.7px;top:205.6px;font:bold 10.5px/15px 'Liberation Sans',sans-serif;color:#1a6c1a;transform:scaleX(0.707);-webkit-text-stroke:0.45px #1a6c1a;">DVB-S</span>
<span class="t" style="left:1070.0px;top:240.9px;font:10.5px/15px 'Liberation Sans',sans-serif;color:#262626;transform:scaleX(0.857);-webkit-text-stroke:0.4px #262626;">Modulation:</span>
<span class="t" style="left:1127.7px;top:240.1px;font:bold 10.5px/15px 'Liberation Sans',sans-serif;color:#1a6c1a;transform:scaleX(0.692);-webkit-text-stroke:0.45px #1a6c1a;">QPSK</span>
<span class="t" style="left:1070.0px;top:275.4px;font:10.5px/15px 'Liberation Sans',sans-serif;color:#262626;transform:scaleX(0.669);-webkit-text-stroke:0.4px #262626;">FEC:</span>
<span class="t" style="left:1127.7px;top:274.6px;font:bold 10.5px/15px 'Liberation Sans',sans-serif;color:#1a6c1a;transform:scaleX(0.829);-webkit-text-stroke:0.45px #1a6c1a;">2/3</span>
<span class="t" style="left:1070.0px;top:309.9px;font:10.5px/15px 'Liberation Sans',sans-serif;color:#262626;transform:scaleX(0.850);-webkit-text-stroke:0.4px #262626;">RollOff:</span>
<span class="t" style="left:1127.7px;top:309.1px;font:bold 10.5px/15px 'Liberation Sans',sans-serif;color:#1a6c1a;transform:scaleX(0.719);-webkit-text-stroke:0.45px #1a6c1a;">0.35</span>
<span class="t" style="left:1070.0px;top:344.4px;font:10.5px/15px 'Liberation Sans',sans-serif;color:#262626;transform:scaleX(0.831);-webkit-text-stroke:0.4px #262626;">Pilot:</span>
<span class="t" style="left:1127.7px;top:343.6px;font:10.5px/15px 'Liberation Sans',sans-serif;color:#262626;transform:scaleX(0.681);-webkit-text-stroke:0.4px #262626;">OFF</span>
<span class="t" style="left:1070.0px;top:378.9px;font:10.5px/15px 'Liberation Sans',sans-serif;color:#262626;transform:scaleX(0.761);-webkit-text-stroke:0.4px #262626;">Spectrum:</span>
<span class="t" style="left:1127.7px;top:378.1px;font:bold 10.5px/15px 'Liberation Sans',sans-serif;color:#1a6c1a;transform:scaleX(0.742);-webkit-text-stroke:0.45px #1a6c1a;">Inverted</span>
<span class="t" style="left:1070.0px;top:413.4px;font:10.5px/15px 'Liberation Sans',sans-serif;color:#262626;transform:scaleX(0.723);-webkit-text-stroke:0.4px #262626;">Frame Type:</span>
<span class="t" style="left:1127.7px;top:412.6px;font:10.5px/15px 'Liberation Sans',sans-serif;color:#262626;transform:scaleX(0.797);-webkit-text-stroke:0.4px #262626;">Long Frame</span>
<span class="t" style="left:1070.0px;top:447.9px;font:10.5px/15px 'Liberation Sans',sans-serif;color:#262626;transform:scaleX(0.797);-webkit-text-stroke:0.4px #262626;">Code Mode:</span>
<span class="t" style="left:1127.7px;top:447.1px;font:10.5px/15px 'Liberation Sans',sans-serif;color:#262626;transform:scaleX(0.723);-webkit-text-stroke:0.4px #262626;">CCM</span>
<span class="t" style="left:1070.0px;top:482.4px;font:10.5px/15px 'Liberation Sans',sans-serif;color:#262626;transform:scaleX(0.773);-webkit-text-stroke:0.4px #262626;">Stream type:</span>
<span class="t" style="left:1127.7px;top:481.6px;font:10.5px/15px 'Liberation Sans',sans-serif;color:#262626;transform:scaleX(0.793);-webkit-text-stroke:0.4px #262626;">Transport</span>
<span class="t" style="left:1070.0px;top:516.9px;font:10.5px/15px 'Liberation Sans',sans-serif;color:#262626;transform:scaleX(0.551);-webkit-text-stroke:0.4px #262626;">ISSYI</span>
<span class="t" style="left:1127.7px;top:516.1px;font:10.5px/15px 'Liberation Sans',sans-serif;color:#262626;transform:scaleX(0.681);-webkit-text-stroke:0.4px #262626;">OFF</span>
<span class="t" style="left:1070.0px;top:551.4px;font:10.5px/15px 'Liberation Sans',sans-serif;color:#262626;transform:scaleX(0.590);-webkit-text-stroke:0.4px #262626;">NPD:</span>
<span class="t" style="left:1127.7px;top:550.6px;font:10.5px/15px 'Liberation Sans',sans-serif;color:#262626;transform:scaleX(0.681);-webkit-text-stroke:0.4px #262626;">OFF</span>
<span class="t" style="left:1070.0px;top:585.9px;font:10.5px/15px 'Liberation Sans',sans-serif;color:#262626;transform:scaleX(0.728);-webkit-text-stroke:0.4px #262626;">RF Level:</span>
<span class="t" style="left:1127.7px;top:585.1px;font:bold 10.5px/15px 'Liberation Sans',sans-serif;color:#1a6c1a;transform:scaleX(0.744);-webkit-text-stroke:0.45px #1a6c1a;">-53 dBm</span>
<span class="t" style="left:1070.0px;top:620.4px;font:10.5px/15px 'Liberation Sans',sans-serif;color:#262626;transform:scaleX(0.755);-webkit-text-stroke:0.4px #262626;">BitRate:</span>
<span class="t" style="left:1127.7px;top:619.6px;font:bold 10.5px/15px 'Liberation Sans',sans-serif;color:#1a6c1a;transform:scaleX(0.793);-webkit-text-stroke:0.45px #1a6c1a;">40,206 Mbit/s</span>
<span class="t" style="left:1070.0px;top:654.9px;font:10.5px/15px 'Liberation Sans',sans-serif;color:#262626;transform:scaleX(0.809);-webkit-text-stroke:0.4px #262626;">CarrierWidth:</span>
<span class="t" style="left:1127.7px;top:654.1px;font:bold 10.5px/15px 'Liberation Sans',sans-serif;color:#1a6c1a;transform:scaleX(0.772);-webkit-text-stroke:0.45px #1a6c1a;">37,123 MHz</span>
<span class="t" style="left:1070.0px;top:700.1px;font:10.5px/15px 'Liberation Sans',sans-serif;color:#262626;transform:scaleX(0.696);-webkit-text-stroke:0.4px #262626;">MIS (0):</span>
<div class="b" style="left:1127.5px;top:698.0px;width:53.8px;height:17.2px;background:#f6f6f6;border-radius:2px;"></div>
<span class="t" style="left:1130.3px;top:699.7px;font:10.5px/15px 'Liberation Sans',sans-serif;color:#333;transform:scaleX(0.822);-webkit-text-stroke:0.2px #333;">Single</span>
<svg width="1200" height="850" viewBox="0 0 1200 850"><path d="M1172.2 705.6 L1174.9 708.4 L1177.6 705.6" stroke="#8c8c8c" stroke-width="0.9" fill="none"/></svg>
<div class="b" style="left:1064.3px;top:746.8px;width:130.9px;height:23.5px;background:#fdfdfd;border:1px solid #d4d4d4;border-radius:4px;"></div>
<svg width="1200" height="850" viewBox="0 0 1200 850"><rect x="1123.5" y="751.5" width="12" height="13.5" fill="#f4f4f4" stroke="#8f98a8" stroke-width="1"/><rect x="1124.3" y="755.5" width="10.4" height="3.2" fill="#2f62c8"/><path d="M1124 753.6 H1135 M1124 761.2 H1135 M1124 763.2 H1135" stroke="#9aa3b3" stroke-width="0.9"/></svg>
<div class="b" style="left:6.2px;top:780.5px;width:91.4px;height:17.9px;background:linear-gradient(#d8fbd8 0,#bdf3bd 50%,#58c663 57%,#82dc84 100%);border:1px solid #8c9a8c;border-radius:2px;"></div>
<span class="t" style="left:8.6px;top:783.5px;font:10px/14px 'Liberation Sans',sans-serif;color:#0a0a0a;transform:scaleX(0.766);-webkit-text-stroke:0.5px #0a0a0a;">Present</span>
<div class="b" style="left:6.2px;top:803.0px;width:91.4px;height:17.7px;background:linear-gradient(#d8fbd8 0,#bdf3bd 50%,#58c663 57%,#82dc84 100%);border:1px solid #8c9a8c;border-radius:2px;"></div>
<span class="t" style="left:8.6px;top:805.9px;font:10px/14px 'Liberation Sans',sans-serif;color:#0a0a0a;transform:scaleX(0.776);-webkit-text-stroke:0.5px #0a0a0a;">Lock</span>
<div class="b" style="left:101.2px;top:780.5px;width:496.8px;height:17.9px;background:linear-gradient(#e4e4e4 0,#d6d6d6 50%,#b6b6b6 57%,#c8c8c8 100%);border:1px solid #a4a4a4;border-radius:2px;overflow:hidden;"></div>
<div class="b" style="left:102.0px;top:781.5px;width:49.0px;height:15.9px;background:linear-gradient(#fde0e0 0,#f8cdcd 50%,#dc9090 57%,#eaa8a8 100%);"></div>
<div class="b" style="left:151.0px;top:781.5px;width:85.3px;height:15.9px;background:linear-gradient(#ffffda 0,#ffffc6 50%,#dcd65c 57%,#e8e278 100%);"></div>
<span class="t" style="left:105.7px;top:783.5px;font:10px/14px 'Liberation Sans',sans-serif;color:#161616;transform:scaleX(0.768);-webkit-text-stroke:0.5px #161616;">Level: 27%</span>
<div class="b" style="left:101.2px;top:803.0px;width:496.8px;height:17.7px;background:linear-gradient(#e4e4e4 0,#d6d6d6 50%,#b6b6b6 57%,#c8c8c8 100%);border:1px solid #a4a4a4;border-radius:2px;overflow:hidden;"></div>
<div class="b" style="left:102.0px;top:804.0px;width:49.0px;height:15.7px;background:linear-gradient(#fde0e0 0,#f8cdcd 50%,#dc9090 57%,#eaa8a8 100%);"></div>
<div class="b" style="left:151.0px;top:804.0px;width:199.0px;height:15.7px;background:linear-gradient(#ffffda 0,#ffffc6 50%,#dcd65c 57%,#e8e278 100%);"></div>
<div class="b" style="left:350.0px;top:804.0px;width:50.0px;height:15.7px;background:linear-gradient(#d8fbd8 0,#bdf3bd 50%,#58c663 57%,#82dc84 100%);"></div>
<span class="t" style="left:105.7px;top:805.9px;font:10px/14px 'Liberation Sans',sans-serif;color:#161616;transform:scaleX(0.794);-webkit-text-stroke:0.5px #161616;">Quality: 60%</span>
<div class="b" style="left:602.4px;top:780.5px;width:497.2px;height:17.9px;background:linear-gradient(#e4e4e4 0,#d6d6d6 50%,#b6b6b6 57%,#c8c8c8 100%);border:1px solid #a4a4a4;border-radius:2px;overflow:hidden;"></div>
<div class="b" style="left:603.2px;top:781.5px;width:106.2px;height:15.9px;background:linear-gradient(#fde0e0 0,#f8cdcd 50%,#dc9090 57%,#eaa8a8 100%);"></div>
<div class="b" style="left:709.4px;top:781.5px;width:70.6px;height:15.9px;background:linear-gradient(#ffffda 0,#ffffc6 50%,#dcd65c 57%,#e8e278 100%);"></div>
<span class="t" style="left:604.2px;top:783.5px;font:10px/14px 'Liberation Sans',sans-serif;color:#161616;transform:scaleX(0.743);-webkit-text-stroke:0.5px #161616;">BER: 8,0E-3</span>
<div class="b" style="left:602.4px;top:803.0px;width:497.2px;height:17.7px;background:linear-gradient(#e4e4e4 0,#d6d6d6 50%,#b6b6b6 57%,#c8c8c8 100%);border:1px solid #a4a4a4;border-radius:2px;overflow:hidden;"></div>
<div class="b" style="left:603.2px;top:804.0px;width:106.2px;height:15.7px;background:linear-gradient(#fde0e0 0,#f8cdcd 50%,#dc9090 57%,#eaa8a8 100%);"></div>
<div class="b" style="left:709.4px;top:804.0px;width:29.4px;height:15.7px;background:linear-gradient(#ffffda 0,#ffffc6 50%,#dcd65c 57%,#e8e278 100%);"></div>
<span class="t" style="left:606.7px;top:805.9px;font:10px/14px 'Liberation Sans',sans-serif;color:#161616;transform:scaleX(0.790);-webkit-text-stroke:0.5px #161616;">SNR: 5,5 dB (Margin: 1,1 dB | Very Poor)</span>
<div class="b" style="left:1102.8px;top:780.5px;width:91.6px;height:17.9px;background:linear-gradient(#d8fbd8 0,#bdf3bd 50%,#58c663 57%,#82dc84 100%);border:1px solid #8c9a8c;border-radius:2px;"></div>
<span class="t" style="left:1105.2px;top:783.5px;font:10px/14px 'Liberation Sans',sans-serif;color:#0a0a0a;transform:scaleX(0.819);-webkit-text-stroke:0.5px #0a0a0a;">Input (~32,31 Mbps)</span>
<div class="b" style="left:1102.8px;top:803.0px;width:91.6px;height:17.7px;background:linear-gradient(#d8fbd8 0,#bdf3bd 50%,#58c663 57%,#82dc84 100%);border:1px solid #8c9a8c;border-radius:2px;"></div>
<span class="t" style="left:1105.2px;top:805.9px;font:10px/14px 'Liberation Sans',sans-serif;color:#0a0a0a;transform:scaleX(0.726);-webkit-text-stroke:0.5px #0a0a0a;">Sync TS</span>
<div class="b" style="left:0.0px;top:826.2px;width:1200.0px;height:1.6px;background:#dadada;"></div>
<div class="b" style="left:392.3px;top:829.5px;width:1.1px;height:17.0px;background:#9a9a9a;"></div>
<div class="b" style="left:792.2px;top:829.5px;width:1.1px;height:17.0px;background:#9a9a9a;"></div>
<div class="b" style="left:1189.6px;top:829.5px;width:1.0px;height:17.0px;background:#9a9a9a;"></div>
<span class="t" style="left:142.5px;top:831.5px;font:10.5px/15px 'Liberation Sans',sans-serif;color:#161616;transform:scaleX(0.837);-webkit-text-stroke:0.55px #161616;">Locked -&gt; Uptime: 72:25:33</span>
<span class="t" style="left:531.0px;top:831.5px;font:10.5px/15px 'Liberation Sans',sans-serif;color:#161616;transform:scaleX(0.786);-webkit-text-stroke:0.55px #161616;">SYNC 653 | TEI 44308 | CC 11729</span>
<span class="t" style="left:917.5px;top:831.5px;font:10.5px/15px 'Liberation Sans',sans-serif;color:#161616;transform:scaleX(0.818);-webkit-text-stroke:0.55px #161616;">Best signal: 7,9 dB (2025-02-17 20:42)</span>
<svg width="1200" height="850" viewBox="0 0 1200 850"><g fill="#9c9c9c"><rect x="1196.5" y="840" width="1.6" height="1.6"/><rect x="1196.5" y="843.5" width="1.6" height="1.6"/><rect x="1196.5" y="847" width="1.6" height="1.6"/><rect x="1193" y="843.5" width="1.6" height="1.6"/><rect x="1193" y="847" width="1.6" height="1.6"/></g><path d="M0 846.5 Q2 847.5 3.2 850" stroke="#222" stroke-width="1.3" fill="none"/></svg>
</body></html>
